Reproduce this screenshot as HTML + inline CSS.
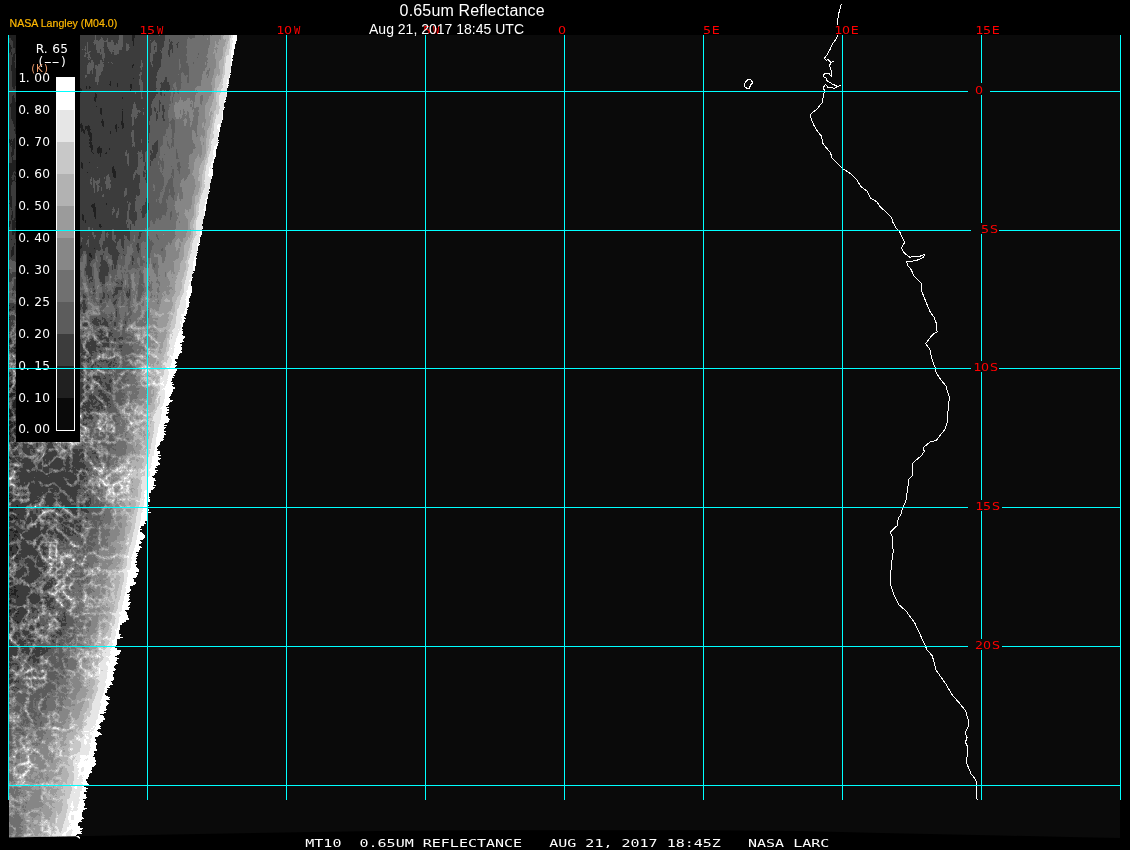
<!DOCTYPE html>
<html><head><meta charset="utf-8"><title>0.65um Reflectance</title>
<style>
html,body{margin:0;padding:0;background:#000;overflow:hidden}
svg{display:block}
text{font-family:"DejaVu Sans Mono","Liberation Mono",monospace;white-space:pre}
.sans{font-family:"Liberation Sans",sans-serif}
.dj{font-family:"DejaVu Sans","Liberation Sans",sans-serif}
.mono{font-family:"DejaVu Sans Mono","Liberation Mono",monospace}
</style></head><body>
<svg width="1130" height="850" viewBox="0 0 1130 850" style="opacity:0.999">
<defs>
<clipPath id="cc"><polygon points="9.0,35.0 237.0,35.0 237.0,36.0 237.0,36.0 237.0,37.0 237.0,37.0 237.0,38.0 237.0,38.0 237.0,39.0 237.0,39.0 237.0,40.0 237.0,40.0 237.0,41.0 236.0,41.0 236.0,42.0 236.0,42.0 236.0,43.0 236.0,43.0 236.0,44.0 235.0,44.0 235.0,45.0 235.0,45.0 235.0,46.0 235.0,46.0 235.0,47.0 235.0,47.0 235.0,48.0 235.0,48.0 235.0,49.0 234.0,49.0 234.0,50.0 234.0,50.0 234.0,51.0 234.0,51.0 234.0,52.0 234.0,52.0 234.0,53.0 234.0,53.0 234.0,54.0 234.0,54.0 234.0,55.0 233.0,55.0 233.0,56.0 233.0,56.0 233.0,57.0 233.0,57.0 233.0,58.0 232.0,58.0 232.0,59.0 233.0,59.0 233.0,60.0 233.0,60.0 233.0,61.0 232.0,61.0 232.0,62.0 232.0,62.0 232.0,63.0 232.0,63.0 232.0,64.0 232.0,64.0 232.0,65.0 232.0,65.0 232.0,66.0 231.0,66.0 231.0,67.0 231.0,67.0 231.0,68.0 231.0,68.0 231.0,69.0 231.0,69.0 231.0,70.0 231.0,70.0 231.0,71.0 231.0,71.0 231.0,72.0 231.0,72.0 231.0,73.0 230.0,73.0 230.0,74.0 231.0,74.0 231.0,75.0 230.0,75.0 230.0,76.0 230.0,76.0 230.0,77.0 230.0,77.0 230.0,78.0 229.0,78.0 229.0,79.0 229.0,79.0 229.0,80.0 229.0,80.0 229.0,81.0 229.0,81.0 229.0,82.0 229.0,82.0 229.0,83.0 229.0,83.0 229.0,84.0 228.0,84.0 228.0,85.0 229.0,85.0 229.0,86.0 228.0,86.0 228.0,87.0 228.0,87.0 228.0,88.0 227.0,88.0 227.0,89.0 227.0,89.0 227.0,90.0 227.0,90.0 227.0,91.0 227.0,91.0 227.0,92.0 227.0,92.0 227.0,93.0 227.0,93.0 227.0,94.0 227.0,94.0 227.0,95.0 227.0,95.0 227.0,96.0 227.0,96.0 227.0,97.0 226.0,97.0 226.0,98.0 226.0,98.0 226.0,99.0 226.0,99.0 226.0,100.0 225.0,100.0 225.0,101.0 226.0,101.0 226.0,102.0 225.0,102.0 225.0,103.0 224.0,103.0 224.0,104.0 224.0,104.0 224.0,105.0 224.0,105.0 224.0,106.0 224.0,106.0 224.0,107.0 225.0,107.0 225.0,108.0 224.0,108.0 224.0,109.0 224.0,109.0 224.0,110.0 223.0,110.0 223.0,111.0 223.0,111.0 223.0,112.0 223.0,112.0 223.0,113.0 223.0,113.0 223.0,114.0 223.0,114.0 223.0,115.0 223.0,115.0 223.0,116.0 223.0,116.0 223.0,117.0 223.0,117.0 223.0,118.0 223.0,118.0 223.0,119.0 223.0,119.0 223.0,120.0 222.0,120.0 222.0,121.0 222.0,121.0 222.0,122.0 222.0,122.0 222.0,123.0 221.0,123.0 221.0,124.0 221.0,124.0 221.0,125.0 221.0,125.0 221.0,126.0 221.0,126.0 221.0,127.0 220.0,127.0 220.0,128.0 220.0,128.0 220.0,129.0 220.0,129.0 220.0,130.0 220.0,130.0 220.0,131.0 220.0,131.0 220.0,132.0 219.0,132.0 219.0,133.0 219.0,133.0 219.0,134.0 219.0,134.0 219.0,135.0 219.0,135.0 219.0,136.0 219.0,136.0 219.0,137.0 218.0,137.0 218.0,138.0 218.0,138.0 218.0,139.0 218.0,139.0 218.0,140.0 219.0,140.0 219.0,141.0 218.0,141.0 218.0,142.0 219.0,142.0 219.0,143.0 218.0,143.0 218.0,144.0 218.0,144.0 218.0,145.0 218.0,145.0 218.0,146.0 217.0,146.0 217.0,147.0 217.0,147.0 217.0,148.0 217.0,148.0 217.0,149.0 216.0,149.0 216.0,150.0 216.0,150.0 216.0,151.0 216.0,151.0 216.0,152.0 216.0,152.0 216.0,153.0 216.0,153.0 216.0,154.0 216.0,154.0 216.0,155.0 216.0,155.0 216.0,156.0 216.0,156.0 216.0,157.0 215.0,157.0 215.0,158.0 215.0,158.0 215.0,159.0 214.0,159.0 214.0,160.0 214.0,160.0 214.0,161.0 214.0,161.0 214.0,162.0 214.0,162.0 214.0,163.0 213.0,163.0 213.0,164.0 213.0,164.0 213.0,165.0 213.0,165.0 213.0,166.0 213.0,166.0 213.0,167.0 213.0,167.0 213.0,168.0 212.0,168.0 212.0,169.0 213.0,169.0 213.0,170.0 213.0,170.0 213.0,171.0 213.0,171.0 213.0,172.0 213.0,172.0 213.0,173.0 213.0,173.0 213.0,174.0 213.0,174.0 213.0,175.0 213.0,175.0 213.0,176.0 212.0,176.0 212.0,177.0 212.0,177.0 212.0,178.0 212.0,178.0 212.0,179.0 211.0,179.0 211.0,180.0 211.0,180.0 211.0,181.0 211.0,181.0 211.0,182.0 211.0,182.0 211.0,183.0 210.0,183.0 210.0,184.0 210.0,184.0 210.0,185.0 210.0,185.0 210.0,186.0 210.0,186.0 210.0,187.0 210.0,187.0 210.0,188.0 210.0,188.0 210.0,189.0 209.0,189.0 209.0,190.0 209.0,190.0 209.0,191.0 210.0,191.0 210.0,192.0 209.0,192.0 209.0,193.0 209.0,193.0 209.0,194.0 208.0,194.0 208.0,195.0 208.0,195.0 208.0,196.0 208.0,196.0 208.0,197.0 208.0,197.0 208.0,198.0 208.0,198.0 208.0,199.0 207.0,199.0 207.0,200.0 207.0,200.0 207.0,201.0 207.0,201.0 207.0,202.0 207.0,202.0 207.0,203.0 207.0,203.0 207.0,204.0 206.0,204.0 206.0,205.0 206.0,205.0 206.0,206.0 206.0,206.0 206.0,207.0 206.0,207.0 206.0,208.0 206.0,208.0 206.0,209.0 206.0,209.0 206.0,210.0 206.0,210.0 206.0,211.0 205.0,211.0 205.0,212.0 205.0,212.0 205.0,213.0 205.0,213.0 205.0,214.0 205.0,214.0 205.0,215.0 205.0,215.0 205.0,216.0 204.0,216.0 204.0,217.0 204.0,217.0 204.0,218.0 204.0,218.0 204.0,219.0 203.0,219.0 203.0,220.0 203.0,220.0 203.0,221.0 203.0,221.0 203.0,222.0 203.0,222.0 203.0,223.0 203.0,223.0 203.0,224.0 202.0,224.0 202.0,225.0 202.0,225.0 202.0,226.0 203.0,226.0 203.0,227.0 203.0,227.0 203.0,228.0 203.0,228.0 203.0,229.0 202.0,229.0 202.0,230.0 202.0,230.0 202.0,231.0 202.0,231.0 202.0,232.0 202.0,232.0 202.0,233.0 202.0,233.0 202.0,234.0 202.0,234.0 202.0,235.0 201.0,235.0 201.0,236.0 201.0,236.0 201.0,237.0 200.0,237.0 200.0,238.0 200.0,238.0 200.0,239.0 200.0,239.0 200.0,240.0 200.0,240.0 200.0,241.0 200.0,241.0 200.0,242.0 200.0,242.0 200.0,243.0 199.0,243.0 199.0,244.0 200.0,244.0 200.0,245.0 199.0,245.0 199.0,246.0 198.0,246.0 198.0,247.0 198.0,247.0 198.0,248.0 198.0,248.0 198.0,249.0 198.0,249.0 198.0,250.0 198.0,250.0 198.0,251.0 197.0,251.0 197.0,252.0 198.0,252.0 198.0,253.0 197.0,253.0 197.0,254.0 197.0,254.0 197.0,255.0 197.0,255.0 197.0,256.0 196.0,256.0 196.0,257.0 196.0,257.0 196.0,258.0 197.0,258.0 197.0,259.0 196.0,259.0 196.0,260.0 196.0,260.0 196.0,261.0 196.0,261.0 196.0,262.0 196.0,262.0 196.0,263.0 196.0,263.0 196.0,264.0 196.0,264.0 196.0,265.0 196.0,265.0 196.0,266.0 195.0,266.0 195.0,267.0 195.0,267.0 195.0,268.0 195.0,268.0 195.0,269.0 195.0,269.0 195.0,270.0 195.0,270.0 195.0,271.0 193.0,271.0 193.0,272.0 194.0,272.0 194.0,273.0 193.0,273.0 193.0,274.0 192.0,274.0 192.0,275.0 192.0,275.0 192.0,276.0 192.0,276.0 192.0,277.0 193.0,277.0 193.0,278.0 192.0,278.0 192.0,279.0 192.0,279.0 192.0,280.0 192.0,280.0 192.0,281.0 191.0,281.0 191.0,282.0 191.0,282.0 191.0,283.0 191.0,283.0 191.0,284.0 191.0,284.0 191.0,285.0 191.0,285.0 191.0,286.0 192.0,286.0 192.0,287.0 192.0,287.0 192.0,288.0 192.0,288.0 192.0,289.0 192.0,289.0 192.0,290.0 192.0,290.0 192.0,291.0 192.0,291.0 192.0,292.0 192.0,292.0 192.0,293.0 191.0,293.0 191.0,294.0 191.0,294.0 191.0,295.0 191.0,295.0 191.0,296.0 190.0,296.0 190.0,297.0 190.0,297.0 190.0,298.0 189.0,298.0 189.0,299.0 189.0,299.0 189.0,300.0 189.0,300.0 189.0,301.0 189.0,301.0 189.0,302.0 190.0,302.0 190.0,303.0 189.0,303.0 189.0,304.0 189.0,304.0 189.0,305.0 189.0,305.0 189.0,306.0 189.0,306.0 189.0,307.0 188.0,307.0 188.0,308.0 187.0,308.0 187.0,309.0 188.0,309.0 188.0,310.0 187.0,310.0 187.0,311.0 187.0,311.0 187.0,312.0 187.0,312.0 187.0,313.0 187.0,313.0 187.0,314.0 186.0,314.0 186.0,315.0 186.0,315.0 186.0,316.0 184.0,316.0 184.0,317.0 185.0,317.0 185.0,318.0 186.0,318.0 186.0,319.0 184.0,319.0 184.0,320.0 185.0,320.0 185.0,321.0 185.0,321.0 185.0,322.0 184.0,322.0 184.0,323.0 183.0,323.0 183.0,324.0 183.0,324.0 183.0,325.0 183.0,325.0 183.0,326.0 183.0,326.0 183.0,327.0 182.0,327.0 182.0,328.0 182.0,328.0 182.0,329.0 183.0,329.0 183.0,330.0 182.0,330.0 182.0,331.0 183.0,331.0 183.0,332.0 183.0,332.0 183.0,333.0 183.0,333.0 183.0,334.0 182.0,334.0 182.0,335.0 183.0,335.0 183.0,336.0 185.0,336.0 185.0,337.0 185.0,337.0 185.0,338.0 184.0,338.0 184.0,339.0 183.0,339.0 183.0,340.0 183.0,340.0 183.0,341.0 184.0,341.0 184.0,342.0 182.0,342.0 182.0,343.0 180.0,343.0 180.0,344.0 182.0,344.0 182.0,345.0 182.0,345.0 182.0,346.0 181.0,346.0 181.0,347.0 182.0,347.0 182.0,348.0 182.0,348.0 182.0,349.0 182.0,349.0 182.0,350.0 181.0,350.0 181.0,351.0 182.0,351.0 182.0,352.0 182.0,352.0 182.0,353.0 180.0,353.0 180.0,354.0 179.0,354.0 179.0,355.0 179.0,355.0 179.0,356.0 178.0,356.0 178.0,357.0 178.0,357.0 178.0,358.0 178.0,358.0 178.0,359.0 175.0,359.0 175.0,360.0 175.0,360.0 175.0,361.0 176.0,361.0 176.0,362.0 177.0,362.0 177.0,363.0 176.0,363.0 176.0,364.0 175.0,364.0 175.0,365.0 177.0,365.0 177.0,366.0 176.0,366.0 176.0,367.0 175.0,367.0 175.0,368.0 178.0,368.0 178.0,369.0 177.0,369.0 177.0,370.0 177.0,370.0 177.0,371.0 176.0,371.0 176.0,372.0 176.0,372.0 176.0,373.0 175.0,373.0 175.0,374.0 174.0,374.0 174.0,375.0 175.0,375.0 175.0,376.0 173.0,376.0 173.0,377.0 174.0,377.0 174.0,378.0 172.0,378.0 172.0,379.0 172.0,379.0 172.0,380.0 172.0,380.0 172.0,381.0 171.0,381.0 171.0,382.0 173.0,382.0 173.0,383.0 172.0,383.0 172.0,384.0 174.0,384.0 174.0,385.0 172.0,385.0 172.0,386.0 173.0,386.0 173.0,387.0 175.0,387.0 175.0,388.0 175.0,388.0 175.0,389.0 173.0,389.0 173.0,390.0 173.0,390.0 173.0,391.0 173.0,391.0 173.0,392.0 172.0,392.0 172.0,393.0 172.0,393.0 172.0,394.0 171.0,394.0 171.0,395.0 171.0,395.0 171.0,396.0 170.0,396.0 170.0,397.0 169.0,397.0 169.0,398.0 170.0,398.0 170.0,399.0 170.0,399.0 170.0,400.0 173.0,400.0 173.0,401.0 172.0,401.0 172.0,402.0 170.0,402.0 170.0,403.0 169.0,403.0 169.0,404.0 169.0,404.0 169.0,405.0 168.0,405.0 168.0,406.0 166.0,406.0 166.0,407.0 169.0,407.0 169.0,408.0 167.0,408.0 167.0,409.0 169.0,409.0 169.0,410.0 169.0,410.0 169.0,411.0 167.0,411.0 167.0,412.0 169.0,412.0 169.0,413.0 168.0,413.0 168.0,414.0 166.0,414.0 166.0,415.0 166.0,415.0 166.0,416.0 168.0,416.0 168.0,417.0 168.0,417.0 168.0,418.0 169.0,418.0 169.0,419.0 170.0,419.0 170.0,420.0 169.0,420.0 169.0,421.0 169.0,421.0 169.0,422.0 168.0,422.0 168.0,423.0 165.0,423.0 165.0,424.0 164.0,424.0 164.0,425.0 167.0,425.0 167.0,426.0 164.0,426.0 164.0,427.0 166.0,427.0 166.0,428.0 165.0,428.0 165.0,429.0 164.0,429.0 164.0,430.0 164.0,430.0 164.0,431.0 166.0,431.0 166.0,432.0 164.0,432.0 164.0,433.0 165.0,433.0 165.0,434.0 166.0,434.0 166.0,435.0 164.0,435.0 164.0,436.0 164.0,436.0 164.0,437.0 164.0,437.0 164.0,438.0 163.0,438.0 163.0,439.0 164.0,439.0 164.0,440.0 163.0,440.0 163.0,441.0 161.0,441.0 161.0,442.0 160.0,442.0 160.0,443.0 160.0,443.0 160.0,444.0 160.0,444.0 160.0,445.0 159.0,445.0 159.0,446.0 158.0,446.0 158.0,447.0 157.0,447.0 157.0,448.0 157.0,448.0 157.0,449.0 158.0,449.0 158.0,450.0 157.0,450.0 157.0,451.0 160.0,451.0 160.0,452.0 160.0,452.0 160.0,453.0 160.0,453.0 160.0,454.0 158.0,454.0 158.0,455.0 161.0,455.0 161.0,456.0 158.0,456.0 158.0,457.0 159.0,457.0 159.0,458.0 161.0,458.0 161.0,459.0 160.0,459.0 160.0,460.0 158.0,460.0 158.0,461.0 158.0,461.0 158.0,462.0 159.0,462.0 159.0,463.0 160.0,463.0 160.0,464.0 160.0,464.0 160.0,465.0 158.0,465.0 158.0,466.0 156.0,466.0 156.0,467.0 157.0,467.0 157.0,468.0 155.0,468.0 155.0,469.0 155.0,469.0 155.0,470.0 158.0,470.0 158.0,471.0 156.0,471.0 156.0,472.0 157.0,472.0 157.0,473.0 155.0,473.0 155.0,474.0 155.0,474.0 155.0,475.0 154.0,475.0 154.0,476.0 152.0,476.0 152.0,477.0 153.0,477.0 153.0,478.0 155.0,478.0 155.0,479.0 155.0,479.0 155.0,480.0 156.0,480.0 156.0,481.0 154.0,481.0 154.0,482.0 154.0,482.0 154.0,483.0 154.0,483.0 154.0,484.0 154.0,484.0 154.0,485.0 156.0,485.0 156.0,486.0 153.0,486.0 153.0,487.0 155.0,487.0 155.0,488.0 154.0,488.0 154.0,489.0 153.0,489.0 153.0,490.0 151.0,490.0 151.0,491.0 151.0,491.0 151.0,492.0 151.0,492.0 151.0,493.0 149.0,493.0 149.0,494.0 149.0,494.0 149.0,495.0 149.0,495.0 149.0,496.0 149.0,496.0 149.0,497.0 150.0,497.0 150.0,498.0 149.0,498.0 149.0,499.0 150.0,499.0 150.0,500.0 150.0,500.0 150.0,501.0 150.0,501.0 150.0,502.0 147.0,502.0 147.0,503.0 148.0,503.0 148.0,504.0 148.0,504.0 148.0,505.0 149.0,505.0 149.0,506.0 147.0,506.0 147.0,507.0 149.0,507.0 149.0,508.0 147.0,508.0 147.0,509.0 149.0,509.0 149.0,510.0 149.0,510.0 149.0,511.0 148.0,511.0 148.0,512.0 151.0,512.0 151.0,513.0 148.0,513.0 148.0,514.0 147.0,514.0 147.0,515.0 147.0,515.0 147.0,516.0 148.0,516.0 148.0,517.0 148.0,517.0 148.0,518.0 148.0,518.0 148.0,519.0 148.0,519.0 148.0,520.0 147.0,520.0 147.0,521.0 145.0,521.0 145.0,522.0 145.0,522.0 145.0,523.0 146.0,523.0 146.0,524.0 144.0,524.0 144.0,525.0 144.0,525.0 144.0,526.0 141.0,526.0 141.0,527.0 141.0,527.0 141.0,528.0 140.0,528.0 140.0,529.0 142.0,529.0 142.0,530.0 140.0,530.0 140.0,531.0 140.0,531.0 140.0,532.0 142.0,532.0 142.0,533.0 143.0,533.0 143.0,534.0 144.0,534.0 144.0,535.0 145.0,535.0 145.0,536.0 145.0,536.0 145.0,537.0 145.0,537.0 145.0,538.0 144.0,538.0 144.0,539.0 143.0,539.0 143.0,540.0 140.0,540.0 140.0,541.0 141.0,541.0 141.0,542.0 142.0,542.0 142.0,543.0 141.0,543.0 141.0,544.0 139.0,544.0 139.0,545.0 139.0,545.0 139.0,546.0 141.0,546.0 141.0,547.0 142.0,547.0 142.0,548.0 140.0,548.0 140.0,549.0 140.0,549.0 140.0,550.0 139.0,550.0 139.0,551.0 139.0,551.0 139.0,552.0 136.0,552.0 136.0,553.0 138.0,553.0 138.0,554.0 137.0,554.0 137.0,555.0 138.0,555.0 138.0,556.0 137.0,556.0 137.0,557.0 136.0,557.0 136.0,558.0 137.0,558.0 137.0,559.0 136.0,559.0 136.0,560.0 136.0,560.0 136.0,561.0 137.0,561.0 137.0,562.0 137.0,562.0 137.0,563.0 135.0,563.0 135.0,564.0 137.0,564.0 137.0,565.0 136.0,565.0 136.0,566.0 136.0,566.0 136.0,567.0 137.0,567.0 137.0,568.0 138.0,568.0 138.0,569.0 139.0,569.0 139.0,570.0 139.0,570.0 139.0,571.0 139.0,571.0 139.0,572.0 136.0,572.0 136.0,573.0 138.0,573.0 138.0,574.0 138.0,574.0 138.0,575.0 137.0,575.0 137.0,576.0 137.0,576.0 137.0,577.0 136.0,577.0 136.0,578.0 133.0,578.0 133.0,579.0 134.0,579.0 134.0,580.0 134.0,580.0 134.0,581.0 134.0,581.0 134.0,582.0 136.0,582.0 136.0,583.0 136.0,583.0 136.0,584.0 135.0,584.0 135.0,585.0 133.0,585.0 133.0,586.0 130.0,586.0 130.0,587.0 130.0,587.0 130.0,588.0 130.0,588.0 130.0,589.0 131.0,589.0 131.0,590.0 131.0,590.0 131.0,591.0 130.0,591.0 130.0,592.0 129.0,592.0 129.0,593.0 127.0,593.0 127.0,594.0 130.0,594.0 130.0,595.0 129.0,595.0 129.0,596.0 130.0,596.0 130.0,597.0 129.0,597.0 129.0,598.0 129.0,598.0 129.0,599.0 130.0,599.0 130.0,600.0 129.0,600.0 129.0,601.0 128.0,601.0 128.0,602.0 131.0,602.0 131.0,603.0 130.0,603.0 130.0,604.0 130.0,604.0 130.0,605.0 129.0,605.0 129.0,606.0 128.0,606.0 128.0,607.0 130.0,607.0 130.0,608.0 129.0,608.0 129.0,609.0 129.0,609.0 129.0,610.0 125.0,610.0 125.0,611.0 126.0,611.0 126.0,612.0 127.0,612.0 127.0,613.0 127.0,613.0 127.0,614.0 127.0,614.0 127.0,615.0 128.0,615.0 128.0,616.0 128.0,616.0 128.0,617.0 128.0,617.0 128.0,618.0 129.0,618.0 129.0,619.0 129.0,619.0 129.0,620.0 126.0,620.0 126.0,621.0 126.0,621.0 126.0,622.0 124.0,622.0 124.0,623.0 122.0,623.0 122.0,624.0 122.0,624.0 122.0,625.0 120.0,625.0 120.0,626.0 120.0,626.0 120.0,627.0 120.0,627.0 120.0,628.0 120.0,628.0 120.0,629.0 120.0,629.0 120.0,630.0 119.0,630.0 119.0,631.0 119.0,631.0 119.0,632.0 119.0,632.0 119.0,633.0 119.0,633.0 119.0,634.0 121.0,634.0 121.0,635.0 120.0,635.0 120.0,636.0 120.0,636.0 120.0,637.0 123.0,637.0 123.0,638.0 120.0,638.0 120.0,639.0 117.0,639.0 117.0,640.0 117.0,640.0 117.0,641.0 117.0,641.0 117.0,642.0 117.0,642.0 117.0,643.0 117.0,643.0 117.0,644.0 117.0,644.0 117.0,645.0 116.0,645.0 116.0,646.0 117.0,646.0 117.0,647.0 115.0,647.0 115.0,648.0 117.0,648.0 117.0,649.0 117.0,649.0 117.0,650.0 121.0,650.0 121.0,651.0 121.0,651.0 121.0,652.0 120.0,652.0 120.0,653.0 120.0,653.0 120.0,654.0 119.0,654.0 119.0,655.0 117.0,655.0 117.0,656.0 115.0,656.0 115.0,657.0 117.0,657.0 117.0,658.0 119.0,658.0 119.0,659.0 117.0,659.0 117.0,660.0 117.0,660.0 117.0,661.0 116.0,661.0 116.0,662.0 117.0,662.0 117.0,663.0 118.0,663.0 118.0,664.0 116.0,664.0 116.0,665.0 115.0,665.0 115.0,666.0 114.0,666.0 114.0,667.0 114.0,667.0 114.0,668.0 115.0,668.0 115.0,669.0 116.0,669.0 116.0,670.0 115.0,670.0 115.0,671.0 113.0,671.0 113.0,672.0 114.0,672.0 114.0,673.0 114.0,673.0 114.0,674.0 113.0,674.0 113.0,675.0 113.0,675.0 113.0,676.0 113.0,676.0 113.0,677.0 114.0,677.0 114.0,678.0 114.0,678.0 114.0,679.0 114.0,679.0 114.0,680.0 113.0,680.0 113.0,681.0 111.0,681.0 111.0,682.0 112.0,682.0 112.0,683.0 112.0,683.0 112.0,684.0 113.0,684.0 113.0,685.0 110.0,685.0 110.0,686.0 109.0,686.0 109.0,687.0 110.0,687.0 110.0,688.0 107.0,688.0 107.0,689.0 108.0,689.0 108.0,690.0 107.0,690.0 107.0,691.0 107.0,691.0 107.0,692.0 107.0,692.0 107.0,693.0 105.0,693.0 105.0,694.0 105.0,694.0 105.0,695.0 106.0,695.0 106.0,696.0 108.0,696.0 108.0,697.0 110.0,697.0 110.0,698.0 109.0,698.0 109.0,699.0 110.0,699.0 110.0,700.0 106.0,700.0 106.0,701.0 107.0,701.0 107.0,702.0 108.0,702.0 108.0,703.0 109.0,703.0 109.0,704.0 108.0,704.0 108.0,705.0 107.0,705.0 107.0,706.0 106.0,706.0 106.0,707.0 106.0,707.0 106.0,708.0 106.0,708.0 106.0,709.0 107.0,709.0 107.0,710.0 106.0,710.0 106.0,711.0 104.0,711.0 104.0,712.0 106.0,712.0 106.0,713.0 104.0,713.0 104.0,714.0 100.0,714.0 100.0,715.0 103.0,715.0 103.0,716.0 104.0,716.0 104.0,717.0 104.0,717.0 104.0,718.0 105.0,718.0 105.0,719.0 105.0,719.0 105.0,720.0 103.0,720.0 103.0,721.0 103.0,721.0 103.0,722.0 101.0,722.0 101.0,723.0 100.0,723.0 100.0,724.0 99.0,724.0 99.0,725.0 100.0,725.0 100.0,726.0 101.0,726.0 101.0,727.0 100.0,727.0 100.0,728.0 101.0,728.0 101.0,729.0 98.0,729.0 98.0,730.0 97.0,730.0 97.0,731.0 98.0,731.0 98.0,732.0 100.0,732.0 100.0,733.0 101.0,733.0 101.0,734.0 102.0,734.0 102.0,735.0 99.0,735.0 99.0,736.0 98.0,736.0 98.0,737.0 95.0,737.0 95.0,738.0 95.0,738.0 95.0,739.0 96.0,739.0 96.0,740.0 96.0,740.0 96.0,741.0 95.0,741.0 95.0,742.0 96.0,742.0 96.0,743.0 97.0,743.0 97.0,744.0 97.0,744.0 97.0,745.0 96.0,745.0 96.0,746.0 96.0,746.0 96.0,747.0 96.0,747.0 96.0,748.0 96.0,748.0 96.0,749.0 97.0,749.0 97.0,750.0 97.0,750.0 97.0,751.0 94.0,751.0 94.0,752.0 94.0,752.0 94.0,753.0 95.0,753.0 95.0,754.0 94.0,754.0 94.0,755.0 94.0,755.0 94.0,756.0 93.0,756.0 93.0,757.0 95.0,757.0 95.0,758.0 95.0,758.0 95.0,759.0 95.0,759.0 95.0,760.0 96.0,760.0 96.0,761.0 96.0,761.0 96.0,762.0 95.0,762.0 95.0,763.0 96.0,763.0 96.0,764.0 96.0,764.0 96.0,765.0 95.0,765.0 95.0,766.0 94.0,766.0 94.0,767.0 92.0,767.0 92.0,768.0 92.0,768.0 92.0,769.0 92.0,769.0 92.0,770.0 91.0,770.0 91.0,771.0 92.0,771.0 92.0,772.0 92.0,772.0 92.0,773.0 90.0,773.0 90.0,774.0 89.0,774.0 89.0,775.0 89.0,775.0 89.0,776.0 89.0,776.0 89.0,777.0 88.0,777.0 88.0,778.0 88.0,778.0 88.0,779.0 86.0,779.0 86.0,780.0 86.0,780.0 86.0,781.0 87.0,781.0 87.0,782.0 87.0,782.0 87.0,783.0 88.0,783.0 88.0,784.0 89.0,784.0 89.0,785.0 88.0,785.0 88.0,786.0 84.0,786.0 84.0,787.0 86.0,787.0 86.0,788.0 88.0,788.0 88.0,789.0 86.0,789.0 86.0,790.0 86.0,790.0 86.0,791.0 87.0,791.0 87.0,792.0 84.0,792.0 84.0,793.0 84.0,793.0 84.0,794.0 86.0,794.0 86.0,795.0 86.0,795.0 86.0,796.0 86.0,796.0 86.0,797.0 87.0,797.0 87.0,798.0 86.0,798.0 86.0,799.0 83.0,799.0 83.0,800.0 85.0,800.0 85.0,801.0 84.0,801.0 84.0,802.0 84.0,802.0 84.0,803.0 85.0,803.0 85.0,804.0 85.0,804.0 85.0,805.0 85.0,805.0 85.0,806.0 84.0,806.0 84.0,807.0 84.0,807.0 84.0,808.0 87.0,808.0 87.0,809.0 85.0,809.0 85.0,810.0 83.0,810.0 83.0,811.0 83.0,811.0 83.0,812.0 82.0,812.0 82.0,813.0 82.0,813.0 82.0,814.0 82.0,814.0 82.0,815.0 82.0,815.0 82.0,816.0 82.0,816.0 82.0,817.0 83.0,817.0 83.0,818.0 84.0,818.0 84.0,819.0 82.0,819.0 82.0,820.0 81.0,820.0 81.0,821.0 82.0,821.0 82.0,822.0 79.0,822.0 79.0,823.0 78.0,823.0 78.0,824.0 78.0,824.0 78.0,825.0 78.0,825.0 78.0,826.0 80.0,826.0 80.0,827.0 80.0,827.0 80.0,828.0 83.0,828.0 83.0,829.0 82.0,829.0 82.0,830.0 80.0,830.0 80.0,831.0 82.0,831.0 82.0,832.0 81.0,832.0 81.0,833.0 82.0,833.0 82.0,834.0 77.0,834.0 77.0,835.0 76.0,835.0 76.0,836.0 79.0,836.0 79.0,837.0 80.0,837.0 80.0,838.0 80.0,838.0 80.0,839.0 76.0,836.2 9.0,837.6"/></clipPath>
<filter id="cf" x="0" y="0" width="320" height="870" filterUnits="userSpaceOnUse" primitiveUnits="userSpaceOnUse" color-interpolation-filters="sRGB">
<feGaussianBlur in="SourceGraphic" stdDeviation="1.5 4" result="src"/>
<feColorMatrix in="src" type="matrix" values="1 0 0 0 0  1 0 0 0 0  1 0 0 0 0  0 0 0 0 1" result="R"/>
<feColorMatrix in="src" type="matrix" values="0 1 0 0 0  0 1 0 0 0  0 1 0 0 0  0 0 0 0 1" result="G"/>
<feColorMatrix in="src" type="matrix" values="0 0 1 0 0  0 0 1 0 0  0 0 1 0 0  0 0 0 0 1" result="B"/>
<feColorMatrix in="src" type="matrix" values="0 0 -1 0 1  0 0 -1 0 1  0 0 -1 0 1  0 0 0 0 1" result="Bi"/>
<feTurbulence type="turbulence" baseFrequency="0.07 0.07" numOctaves="4" seed="7" result="tb"/>
<feColorMatrix in="tb" type="matrix" values="-2.9 0 0 0 1.12  -2.9 0 0 0 1.12  -2.9 0 0 0 1.12  0 0 0 0 1" result="N1a"/>
<feTurbulence type="fractalNoise" baseFrequency="0.022 0.022" numOctaves="3" seed="23" result="lf"/>
<feColorMatrix in="lf" type="matrix" values="2.6 0 0 0 -0.8  2.6 0 0 0 -0.8  2.6 0 0 0 -0.8  0 0 0 0 1" result="NLo"/>
<feComposite in="N1a" in2="NLo" operator="arithmetic" k1="0" k2="0.58" k3="0.42" k4="-0.14" result="N1c"/>
<feTurbulence type="fractalNoise" baseFrequency="0.3 0.3" numOctaves="2" seed="41" result="ff"/>
<feColorMatrix in="ff" type="matrix" values="0 0 2.6 0 -0.8  0 0 2.6 0 -0.8  0 0 2.6 0 -0.8  0 0 0 0 1" result="NF"/>
<feComposite in="N1c" in2="NF" operator="arithmetic" k1="0" k2="1" k3="0.24" k4="0" result="N1b"/>
<feComponentTransfer in="N1b" result="N1"><feFuncR type="gamma" exponent="1.7" amplitude="1" offset="0"/><feFuncG type="gamma" exponent="1.7" amplitude="1" offset="0"/><feFuncB type="gamma" exponent="1.7" amplitude="1" offset="0"/></feComponentTransfer>
<feTurbulence type="fractalNoise" baseFrequency="0.16 0.05" numOctaves="4" seed="11" result="fn"/>
<feColorMatrix in="fn" type="matrix" values="0 2.6 0 0 -0.8  0 2.6 0 0 -0.8  0 2.6 0 0 -0.8  0 0 0 0 1" result="N2"/>
<feComposite in="B" in2="N1" operator="arithmetic" k1="1" k2="0" k3="0" k4="0" result="T"/>
<feComposite in="Bi" in2="N2" operator="arithmetic" k1="1" k2="0" k3="0" k4="0" result="U"/>
<feComposite in="T" in2="U" operator="arithmetic" k1="0" k2="1" k3="1" k4="0" result="N"/>
<feComposite in="G" in2="N" operator="arithmetic" k1="1" k2="0" k3="0" k4="0" result="GN"/>
<feComposite in="R" in2="GN" operator="arithmetic" k1="0" k2="1" k3="1" k4="0" result="F"/>
<feComponentTransfer in="F"><feFuncR type="discrete" tableValues="0.0392 0.1255 0.2353 0.3608 0.4392 0.5294 0.6078 0.6980 0.7843 0.9020 1.0000"/><feFuncG type="discrete" tableValues="0.0392 0.1255 0.2353 0.3608 0.4392 0.5294 0.6078 0.6980 0.7843 0.9020 1.0000"/><feFuncB type="discrete" tableValues="0.0392 0.1255 0.2353 0.3608 0.4392 0.5294 0.6078 0.6980 0.7843 0.9020 1.0000"/></feComponentTransfer>
</filter>
</defs>
<rect width="1130" height="850" fill="#000"/>
<polygon points="9.0,35.0 1120.0,35.0 1120.0,838.0 1080.0,837.3 1000.0,835.5 880.0,833.0 800.0,831.0 700.0,830.3 480.0,830.3 380.0,831.0 300.0,832.3 200.0,834.0 75.0,836.2 9.0,837.6" fill="#0a0a0a"/>
<g clip-path="url(#cc)"><g filter="url(#cf)">
<rect x="0" y="0" width="320" height="870" fill="#300000"/>
<polygon fill="#f11700" points="270.6,15.0 267.0,35.5 237.0,35.5 240.6,15.0"/>
<polygon fill="#e91700" points="240.6,15.0 237.0,35.5 234.0,35.5 237.6,15.0"/>
<polygon fill="#d51700" points="237.6,15.0 234.0,35.5 230.0,35.5 233.6,15.0"/>
<polygon fill="#b91700" points="233.6,15.0 230.0,35.5 227.0,35.5 230.6,15.0"/>
<polygon fill="#9a1700" points="230.6,15.0 227.0,35.5 223.0,35.5 226.6,15.0"/>
<polygon fill="#851700" points="226.6,15.0 223.0,35.5 219.0,35.5 222.6,15.0"/>
<polygon fill="#7a1700" points="222.6,15.0 219.0,35.5 215.0,35.5 218.6,15.0"/>
<polygon fill="#6f1700" points="218.6,15.0 215.0,35.5 210.0,35.5 213.6,15.0"/>
<polygon fill="#631700" points="213.6,15.0 210.0,35.5 204.0,35.5 207.6,15.0"/>
<polygon fill="#591700" points="207.6,15.0 204.0,35.5 197.0,35.5 200.6,15.0"/>
<polygon fill="#531700" points="200.6,15.0 197.0,35.5 189.0,35.5 192.6,15.0"/>
<polygon fill="#4a1700" points="192.6,15.0 189.0,35.5 179.0,35.5 182.6,15.0"/>
<polygon fill="#3f1700" points="182.6,15.0 179.0,35.5 164.0,35.5 167.6,15.0"/>
<polygon fill="#311700" points="167.6,15.0 164.0,35.5 142.0,35.5 145.6,15.0"/>
<polygon fill="#2e1700" points="145.6,15.0 142.0,35.5 -63.0,35.5 -59.4,15.0"/>
<polygon fill="#f11700" points="267.0,35.0 263.4,55.5 233.4,55.5 237.0,35.0"/>
<polygon fill="#e91700" points="237.0,35.0 233.4,55.5 230.4,55.5 234.0,35.0"/>
<polygon fill="#d51700" points="234.0,35.0 230.4,55.5 226.4,55.5 230.0,35.0"/>
<polygon fill="#b91700" points="230.0,35.0 226.4,55.5 223.4,55.5 227.0,35.0"/>
<polygon fill="#9a1700" points="227.0,35.0 223.4,55.5 219.4,55.5 223.0,35.0"/>
<polygon fill="#851700" points="223.0,35.0 219.4,55.5 215.4,55.5 219.0,35.0"/>
<polygon fill="#7a1700" points="219.0,35.0 215.4,55.5 211.4,55.5 215.0,35.0"/>
<polygon fill="#6f1700" points="215.0,35.0 211.4,55.5 206.4,55.5 210.0,35.0"/>
<polygon fill="#631700" points="210.0,35.0 206.4,55.5 200.4,55.5 204.0,35.0"/>
<polygon fill="#591700" points="204.0,35.0 200.4,55.5 193.4,55.5 197.0,35.0"/>
<polygon fill="#531700" points="197.0,35.0 193.4,55.5 185.4,55.5 189.0,35.0"/>
<polygon fill="#4a1700" points="189.0,35.0 185.4,55.5 175.4,55.5 179.0,35.0"/>
<polygon fill="#3f1700" points="179.0,35.0 175.4,55.5 160.4,55.5 164.0,35.0"/>
<polygon fill="#311700" points="164.0,35.0 160.4,55.5 138.4,55.5 142.0,35.0"/>
<polygon fill="#2e1700" points="142.0,35.0 138.4,55.5 -66.6,55.5 -63.0,35.0"/>
<polygon fill="#f11700" points="263.4,55.0 259.8,75.5 229.8,75.5 233.4,55.0"/>
<polygon fill="#e91700" points="233.4,55.0 229.8,75.5 226.8,75.5 230.4,55.0"/>
<polygon fill="#d51700" points="230.4,55.0 226.8,75.5 222.8,75.5 226.4,55.0"/>
<polygon fill="#b91700" points="226.4,55.0 222.8,75.5 219.8,75.5 223.4,55.0"/>
<polygon fill="#9a1700" points="223.4,55.0 219.8,75.5 215.8,75.5 219.4,55.0"/>
<polygon fill="#851700" points="219.4,55.0 215.8,75.5 211.8,75.5 215.4,55.0"/>
<polygon fill="#7a1700" points="215.4,55.0 211.8,75.5 207.8,75.5 211.4,55.0"/>
<polygon fill="#6f1700" points="211.4,55.0 207.8,75.5 202.8,75.5 206.4,55.0"/>
<polygon fill="#631700" points="206.4,55.0 202.8,75.5 196.8,75.5 200.4,55.0"/>
<polygon fill="#591700" points="200.4,55.0 196.8,75.5 189.8,75.5 193.4,55.0"/>
<polygon fill="#531700" points="193.4,55.0 189.8,75.5 181.8,75.5 185.4,55.0"/>
<polygon fill="#4a1700" points="185.4,55.0 181.8,75.5 171.8,75.5 175.4,55.0"/>
<polygon fill="#3f1700" points="175.4,55.0 171.8,75.5 156.8,75.5 160.4,55.0"/>
<polygon fill="#311700" points="160.4,55.0 156.8,75.5 134.8,75.5 138.4,55.0"/>
<polygon fill="#2e1700" points="138.4,55.0 134.8,75.5 -70.2,75.5 -66.6,55.0"/>
<polygon fill="#f11700" points="259.8,75.0 256.2,95.5 226.2,95.5 229.8,75.0"/>
<polygon fill="#e91700" points="229.8,75.0 226.2,95.5 223.2,95.5 226.8,75.0"/>
<polygon fill="#d51700" points="226.8,75.0 223.2,95.5 219.2,95.5 222.8,75.0"/>
<polygon fill="#b91700" points="222.8,75.0 219.2,95.5 216.2,95.5 219.8,75.0"/>
<polygon fill="#9a1700" points="219.8,75.0 216.2,95.5 212.2,95.5 215.8,75.0"/>
<polygon fill="#851700" points="215.8,75.0 212.2,95.5 208.2,95.5 211.8,75.0"/>
<polygon fill="#7a1700" points="211.8,75.0 208.2,95.5 204.2,95.5 207.8,75.0"/>
<polygon fill="#6f1700" points="207.8,75.0 204.2,95.5 199.2,95.5 202.8,75.0"/>
<polygon fill="#631700" points="202.8,75.0 199.2,95.5 193.2,95.5 196.8,75.0"/>
<polygon fill="#591700" points="196.8,75.0 193.2,95.5 186.2,95.5 189.8,75.0"/>
<polygon fill="#531700" points="189.8,75.0 186.2,95.5 178.2,95.5 181.8,75.0"/>
<polygon fill="#4a1700" points="181.8,75.0 178.2,95.5 168.2,95.5 171.8,75.0"/>
<polygon fill="#3f1700" points="171.8,75.0 168.2,95.5 153.2,95.5 156.8,75.0"/>
<polygon fill="#311700" points="156.8,75.0 153.2,95.5 131.2,95.5 134.8,75.0"/>
<polygon fill="#2e1700" points="134.8,75.0 131.2,95.5 -73.8,95.5 -70.2,75.0"/>
<polygon fill="#f11700" points="256.2,95.0 252.7,115.5 222.7,115.5 226.2,95.0"/>
<polygon fill="#e91700" points="226.2,95.0 222.7,115.5 219.7,115.5 223.2,95.0"/>
<polygon fill="#d51700" points="223.2,95.0 219.7,115.5 215.7,115.5 219.2,95.0"/>
<polygon fill="#b91700" points="219.2,95.0 215.7,115.5 212.7,115.5 216.2,95.0"/>
<polygon fill="#9a1700" points="216.2,95.0 212.7,115.5 208.7,115.5 212.2,95.0"/>
<polygon fill="#851700" points="212.2,95.0 208.7,115.5 204.7,115.5 208.2,95.0"/>
<polygon fill="#7a1700" points="208.2,95.0 204.7,115.5 200.7,115.5 204.2,95.0"/>
<polygon fill="#6f1700" points="204.2,95.0 200.7,115.5 195.7,115.5 199.2,95.0"/>
<polygon fill="#631700" points="199.2,95.0 195.7,115.5 189.7,115.5 193.2,95.0"/>
<polygon fill="#591700" points="193.2,95.0 189.7,115.5 182.7,115.5 186.2,95.0"/>
<polygon fill="#531700" points="186.2,95.0 182.7,115.5 174.7,115.5 178.2,95.0"/>
<polygon fill="#4a1700" points="178.2,95.0 174.7,115.5 164.7,115.5 168.2,95.0"/>
<polygon fill="#3f1700" points="168.2,95.0 164.7,115.5 149.7,115.5 153.2,95.0"/>
<polygon fill="#311700" points="153.2,95.0 149.7,115.5 127.7,115.5 131.2,95.0"/>
<polygon fill="#2e1700" points="131.2,95.0 127.7,115.5 -77.3,115.5 -73.8,95.0"/>
<polygon fill="#f11700" points="252.7,115.0 249.1,135.5 219.1,135.5 222.7,115.0"/>
<polygon fill="#e91700" points="222.7,115.0 219.1,135.5 216.1,135.5 219.7,115.0"/>
<polygon fill="#d51700" points="219.7,115.0 216.1,135.5 212.1,135.5 215.7,115.0"/>
<polygon fill="#b91700" points="215.7,115.0 212.1,135.5 209.1,135.5 212.7,115.0"/>
<polygon fill="#9a1700" points="212.7,115.0 209.1,135.5 205.1,135.5 208.7,115.0"/>
<polygon fill="#851700" points="208.7,115.0 205.1,135.5 201.1,135.5 204.7,115.0"/>
<polygon fill="#7a1700" points="204.7,115.0 201.1,135.5 197.1,135.5 200.7,115.0"/>
<polygon fill="#6f1700" points="200.7,115.0 197.1,135.5 192.1,135.5 195.7,115.0"/>
<polygon fill="#631700" points="195.7,115.0 192.1,135.5 186.1,135.5 189.7,115.0"/>
<polygon fill="#591700" points="189.7,115.0 186.1,135.5 179.1,135.5 182.7,115.0"/>
<polygon fill="#531700" points="182.7,115.0 179.1,135.5 171.1,135.5 174.7,115.0"/>
<polygon fill="#4a1700" points="174.7,115.0 171.1,135.5 161.1,135.5 164.7,115.0"/>
<polygon fill="#3f1700" points="164.7,115.0 161.1,135.5 146.1,135.5 149.7,115.0"/>
<polygon fill="#311700" points="149.7,115.0 146.1,135.5 124.1,135.5 127.7,115.0"/>
<polygon fill="#2e1700" points="127.7,115.0 124.1,135.5 -80.9,135.5 -77.3,115.0"/>
<polygon fill="#f11700" points="249.1,135.0 245.5,155.5 215.5,155.5 219.1,135.0"/>
<polygon fill="#e91700" points="219.1,135.0 215.5,155.5 212.5,155.5 216.1,135.0"/>
<polygon fill="#d51700" points="216.1,135.0 212.5,155.5 208.5,155.5 212.1,135.0"/>
<polygon fill="#b91700" points="212.1,135.0 208.5,155.5 205.5,155.5 209.1,135.0"/>
<polygon fill="#9a1700" points="209.1,135.0 205.5,155.5 201.5,155.5 205.1,135.0"/>
<polygon fill="#851700" points="205.1,135.0 201.5,155.5 197.5,155.5 201.1,135.0"/>
<polygon fill="#7a1700" points="201.1,135.0 197.5,155.5 193.5,155.5 197.1,135.0"/>
<polygon fill="#6f1700" points="197.1,135.0 193.5,155.5 188.5,155.5 192.1,135.0"/>
<polygon fill="#631700" points="192.1,135.0 188.5,155.5 182.5,155.5 186.1,135.0"/>
<polygon fill="#591700" points="186.1,135.0 182.5,155.5 175.5,155.5 179.1,135.0"/>
<polygon fill="#531700" points="179.1,135.0 175.5,155.5 167.5,155.5 171.1,135.0"/>
<polygon fill="#4a1700" points="171.1,135.0 167.5,155.5 157.5,155.5 161.1,135.0"/>
<polygon fill="#3f1700" points="161.1,135.0 157.5,155.5 142.5,155.5 146.1,135.0"/>
<polygon fill="#311700" points="146.1,135.0 142.5,155.5 120.5,155.5 124.1,135.0"/>
<polygon fill="#2e1700" points="124.1,135.0 120.5,155.5 -84.5,155.5 -80.9,135.0"/>
<polygon fill="#f11700" points="245.5,155.0 241.9,175.5 211.9,175.5 215.5,155.0"/>
<polygon fill="#e91700" points="215.5,155.0 211.9,175.5 208.9,175.5 212.5,155.0"/>
<polygon fill="#d51700" points="212.5,155.0 208.9,175.5 204.9,175.5 208.5,155.0"/>
<polygon fill="#b91700" points="208.5,155.0 204.9,175.5 201.9,175.5 205.5,155.0"/>
<polygon fill="#9a1700" points="205.5,155.0 201.9,175.5 197.9,175.5 201.5,155.0"/>
<polygon fill="#851700" points="201.5,155.0 197.9,175.5 193.9,175.5 197.5,155.0"/>
<polygon fill="#7a1700" points="197.5,155.0 193.9,175.5 189.9,175.5 193.5,155.0"/>
<polygon fill="#6f1700" points="193.5,155.0 189.9,175.5 184.9,175.5 188.5,155.0"/>
<polygon fill="#631700" points="188.5,155.0 184.9,175.5 178.9,175.5 182.5,155.0"/>
<polygon fill="#591700" points="182.5,155.0 178.9,175.5 171.9,175.5 175.5,155.0"/>
<polygon fill="#531700" points="175.5,155.0 171.9,175.5 163.9,175.5 167.5,155.0"/>
<polygon fill="#4a1700" points="167.5,155.0 163.9,175.5 153.9,175.5 157.5,155.0"/>
<polygon fill="#3f1700" points="157.5,155.0 153.9,175.5 138.9,175.5 142.5,155.0"/>
<polygon fill="#311700" points="142.5,155.0 138.9,175.5 116.9,175.5 120.5,155.0"/>
<polygon fill="#2e1700" points="120.5,155.0 116.9,175.5 -88.1,175.5 -84.5,155.0"/>
<polygon fill="#f11700" points="241.9,175.0 238.2,195.5 208.2,195.5 211.9,175.0"/>
<polygon fill="#e91700" points="211.9,175.0 208.2,195.5 205.2,195.5 208.9,175.0"/>
<polygon fill="#d51700" points="208.9,175.0 205.2,195.5 201.2,195.5 204.9,175.0"/>
<polygon fill="#b91700" points="204.9,175.0 201.2,195.5 198.2,195.5 201.9,175.0"/>
<polygon fill="#9a1700" points="201.9,175.0 198.2,195.5 194.2,195.5 197.9,175.0"/>
<polygon fill="#851700" points="197.9,175.0 194.2,195.5 190.2,195.5 193.9,175.0"/>
<polygon fill="#7a1700" points="193.9,175.0 190.2,195.5 186.2,195.5 189.9,175.0"/>
<polygon fill="#6f1700" points="189.9,175.0 186.2,195.5 181.2,195.5 184.9,175.0"/>
<polygon fill="#631700" points="184.9,175.0 181.2,195.5 175.2,195.5 178.9,175.0"/>
<polygon fill="#591700" points="178.9,175.0 175.2,195.5 168.2,195.5 171.9,175.0"/>
<polygon fill="#531700" points="171.9,175.0 168.2,195.5 160.2,195.5 163.9,175.0"/>
<polygon fill="#4a1700" points="163.9,175.0 160.2,195.5 150.2,195.5 153.9,175.0"/>
<polygon fill="#3f1700" points="153.9,175.0 150.2,195.5 135.2,195.5 138.9,175.0"/>
<polygon fill="#311700" points="138.9,175.0 135.2,195.5 113.2,195.5 116.9,175.0"/>
<polygon fill="#2e1700" points="116.9,175.0 113.2,195.5 -91.8,195.5 -88.1,175.0"/>
<polygon fill="#f11700" points="238.2,195.0 234.6,215.5 204.6,215.5 208.2,195.0"/>
<polygon fill="#e91700" points="208.2,195.0 204.6,215.5 201.6,215.5 205.2,195.0"/>
<polygon fill="#d51700" points="205.2,195.0 201.6,215.5 197.6,215.5 201.2,195.0"/>
<polygon fill="#b91700" points="201.2,195.0 197.6,215.5 194.6,215.5 198.2,195.0"/>
<polygon fill="#9a1700" points="198.2,195.0 194.6,215.5 190.6,215.5 194.2,195.0"/>
<polygon fill="#851700" points="194.2,195.0 190.6,215.5 186.6,215.5 190.2,195.0"/>
<polygon fill="#7a1700" points="190.2,195.0 186.6,215.5 182.6,215.5 186.2,195.0"/>
<polygon fill="#6f1700" points="186.2,195.0 182.6,215.5 177.6,215.5 181.2,195.0"/>
<polygon fill="#631700" points="181.2,195.0 177.6,215.5 171.6,215.5 175.2,195.0"/>
<polygon fill="#591700" points="175.2,195.0 171.6,215.5 164.6,215.5 168.2,195.0"/>
<polygon fill="#531700" points="168.2,195.0 164.6,215.5 156.6,215.5 160.2,195.0"/>
<polygon fill="#4a1700" points="160.2,195.0 156.6,215.5 146.6,215.5 150.2,195.0"/>
<polygon fill="#3f1700" points="150.2,195.0 146.6,215.5 131.6,215.5 135.2,195.0"/>
<polygon fill="#311700" points="135.2,195.0 131.6,215.5 109.6,215.5 113.2,195.0"/>
<polygon fill="#2e1700" points="113.2,195.0 109.6,215.5 -95.4,215.5 -91.8,195.0"/>
<polygon fill="#f11700" points="234.6,215.0 230.9,235.5 200.9,235.5 204.6,215.0"/>
<polygon fill="#e91700" points="204.6,215.0 200.9,235.5 197.9,235.5 201.6,215.0"/>
<polygon fill="#d51700" points="201.6,215.0 197.9,235.5 193.9,235.5 197.6,215.0"/>
<polygon fill="#b91700" points="197.6,215.0 193.9,235.5 190.9,235.5 194.6,215.0"/>
<polygon fill="#9a1700" points="194.6,215.0 190.9,235.5 186.9,235.5 190.6,215.0"/>
<polygon fill="#851700" points="190.6,215.0 186.9,235.5 182.9,235.5 186.6,215.0"/>
<polygon fill="#7a1700" points="186.6,215.0 182.9,235.5 178.9,235.5 182.6,215.0"/>
<polygon fill="#6f1700" points="182.6,215.0 178.9,235.5 173.9,235.5 177.6,215.0"/>
<polygon fill="#631700" points="177.6,215.0 173.9,235.5 167.9,235.5 171.6,215.0"/>
<polygon fill="#591700" points="171.6,215.0 167.9,235.5 160.9,235.5 164.6,215.0"/>
<polygon fill="#531700" points="164.6,215.0 160.9,235.5 152.9,235.5 156.6,215.0"/>
<polygon fill="#4a1700" points="156.6,215.0 152.9,235.5 142.9,235.5 146.6,215.0"/>
<polygon fill="#3f1700" points="146.6,215.0 142.9,235.5 127.9,235.5 131.6,215.0"/>
<polygon fill="#311700" points="131.6,215.0 127.9,235.5 105.9,235.5 109.6,215.0"/>
<polygon fill="#2e1700" points="109.6,215.0 105.9,235.5 -99.1,235.5 -95.4,215.0"/>
<polygon fill="#f21617" points="230.9,235.0 227.2,255.5 197.2,255.5 200.9,235.0"/>
<polygon fill="#ea1617" points="200.9,235.0 197.2,255.5 194.2,255.5 197.9,235.0"/>
<polygon fill="#d81617" points="197.9,235.0 194.2,255.5 190.2,255.5 193.9,235.0"/>
<polygon fill="#bd1717" points="193.9,235.0 190.2,255.5 187.2,255.5 190.9,235.0"/>
<polygon fill="#9e1a17" points="190.9,235.0 187.2,255.5 183.2,255.5 186.9,235.0"/>
<polygon fill="#881d17" points="186.9,235.0 183.2,255.5 179.2,255.5 182.9,235.0"/>
<polygon fill="#7d1e17" points="182.9,235.0 179.2,255.5 175.2,255.5 178.9,235.0"/>
<polygon fill="#711f17" points="178.9,235.0 175.2,255.5 170.2,255.5 173.9,235.0"/>
<polygon fill="#652117" points="173.9,235.0 170.2,255.5 164.2,255.5 167.9,235.0"/>
<polygon fill="#5b2217" points="167.9,235.0 164.2,255.5 157.2,255.5 160.9,235.0"/>
<polygon fill="#532317" points="160.9,235.0 157.2,255.5 149.2,255.5 152.9,235.0"/>
<polygon fill="#4a2417" points="152.9,235.0 149.2,255.5 139.2,255.5 142.9,235.0"/>
<polygon fill="#3f2617" points="142.9,235.0 139.2,255.5 124.2,255.5 127.9,235.0"/>
<polygon fill="#312717" points="127.9,235.0 124.2,255.5 102.2,255.5 105.9,235.0"/>
<polygon fill="#2e2717" points="105.9,235.0 102.2,255.5 -102.8,255.5 -99.1,235.0"/>
<polygon fill="#f41346" points="227.2,255.0 223.6,275.5 193.6,275.5 197.2,255.0"/>
<polygon fill="#ed1346" points="197.2,255.0 193.6,275.5 190.6,275.5 194.2,255.0"/>
<polygon fill="#dc1546" points="194.2,255.0 190.6,275.5 186.6,275.5 190.2,255.0"/>
<polygon fill="#c51846" points="190.2,255.0 186.6,275.5 183.6,275.5 187.2,255.0"/>
<polygon fill="#a61f46" points="187.2,255.0 183.6,275.5 179.6,275.5 183.2,255.0"/>
<polygon fill="#8e2746" points="183.2,255.0 179.6,275.5 175.6,275.5 179.2,255.0"/>
<polygon fill="#822b46" points="179.2,255.0 175.6,275.5 171.6,275.5 175.2,255.0"/>
<polygon fill="#762f46" points="175.2,255.0 171.6,275.5 166.6,275.5 170.2,255.0"/>
<polygon fill="#693346" points="170.2,255.0 166.6,275.5 160.6,275.5 164.2,255.0"/>
<polygon fill="#5e3746" points="164.2,255.0 160.6,275.5 153.6,275.5 157.2,255.0"/>
<polygon fill="#543b46" points="157.2,255.0 153.6,275.5 145.6,275.5 149.2,255.0"/>
<polygon fill="#4b3f46" points="149.2,255.0 145.6,275.5 135.6,275.5 139.2,255.0"/>
<polygon fill="#3f4346" points="139.2,255.0 135.6,275.5 120.6,275.5 124.2,255.0"/>
<polygon fill="#324546" points="124.2,255.0 120.6,275.5 98.6,275.5 102.2,255.0"/>
<polygon fill="#2e4646" points="102.2,255.0 98.6,275.5 -106.4,275.5 -102.8,255.0"/>
<polygon fill="#f61074" points="223.6,275.0 219.9,295.5 189.9,295.5 193.6,275.0"/>
<polygon fill="#f01074" points="193.6,275.0 189.9,295.5 186.9,295.5 190.6,275.0"/>
<polygon fill="#e11374" points="190.6,275.0 186.9,295.5 182.9,295.5 186.6,275.0"/>
<polygon fill="#cd1874" points="186.6,275.0 182.9,295.5 179.9,295.5 183.6,275.0"/>
<polygon fill="#af2474" points="183.6,275.0 179.9,295.5 175.9,295.5 179.6,275.0"/>
<polygon fill="#953274" points="179.6,275.0 175.9,295.5 171.9,295.5 175.6,275.0"/>
<polygon fill="#883874" points="175.6,275.0 171.9,295.5 167.9,295.5 171.6,275.0"/>
<polygon fill="#7b3f74" points="171.6,275.0 167.9,295.5 162.9,295.5 166.6,275.0"/>
<polygon fill="#6d4674" points="166.6,275.0 162.9,295.5 156.9,295.5 160.6,275.0"/>
<polygon fill="#614d74" points="160.6,275.0 156.9,295.5 149.9,295.5 153.6,275.0"/>
<polygon fill="#565474" points="153.6,275.0 149.9,295.5 141.9,295.5 145.6,275.0"/>
<polygon fill="#4b5a74" points="145.6,275.0 141.9,295.5 131.9,295.5 135.6,275.0"/>
<polygon fill="#3f6074" points="135.6,275.0 131.9,295.5 116.9,295.5 120.6,275.0"/>
<polygon fill="#326474" points="120.6,275.0 116.9,295.5 94.9,295.5 98.6,275.0"/>
<polygon fill="#2f6674" points="98.6,275.0 94.9,295.5 -110.1,295.5 -106.4,275.0"/>
<polygon fill="#f80da2" points="219.9,295.0 216.2,315.5 186.2,315.5 189.9,295.0"/>
<polygon fill="#f30da2" points="189.9,295.0 186.2,315.5 183.2,315.5 186.9,295.0"/>
<polygon fill="#e611a2" points="186.9,295.0 183.2,315.5 179.2,315.5 182.9,295.0"/>
<polygon fill="#d418a2" points="182.9,295.0 179.2,315.5 176.2,315.5 179.9,295.0"/>
<polygon fill="#b729a2" points="179.9,295.0 176.2,315.5 172.2,315.5 175.9,295.0"/>
<polygon fill="#9b3da2" points="175.9,295.0 172.2,315.5 168.2,315.5 171.9,295.0"/>
<polygon fill="#8e45a2" points="171.9,295.0 168.2,315.5 164.2,315.5 167.9,295.0"/>
<polygon fill="#804fa2" points="167.9,295.0 164.2,315.5 159.2,315.5 162.9,295.0"/>
<polygon fill="#7159a2" points="162.9,295.0 159.2,315.5 153.2,315.5 156.9,295.0"/>
<polygon fill="#6462a2" points="156.9,295.0 153.2,315.5 146.2,315.5 149.9,295.0"/>
<polygon fill="#576ca2" points="149.9,295.0 146.2,315.5 138.2,315.5 141.9,295.0"/>
<polygon fill="#4b74a2" points="141.9,295.0 138.2,315.5 128.2,315.5 131.9,295.0"/>
<polygon fill="#3e7ca2" points="131.9,295.0 128.2,315.5 113.2,315.5 116.9,295.0"/>
<polygon fill="#3382a2" points="116.9,295.0 113.2,315.5 91.2,315.5 94.9,295.0"/>
<polygon fill="#2f85a2" points="94.9,295.0 91.2,315.5 -113.8,315.5 -110.1,295.0"/>
<polygon fill="#fb0ad1" points="216.2,315.0 212.5,335.5 182.5,335.5 186.2,315.0"/>
<polygon fill="#f60ad1" points="186.2,315.0 182.5,335.5 179.5,335.5 183.2,315.0"/>
<polygon fill="#eb0fd1" points="183.2,315.0 179.5,335.5 175.5,335.5 179.2,315.0"/>
<polygon fill="#dc18d1" points="179.2,315.0 175.5,335.5 172.5,335.5 176.2,315.0"/>
<polygon fill="#bf2fd1" points="176.2,315.0 172.5,335.5 168.5,335.5 172.2,315.0"/>
<polygon fill="#a148d1" points="172.2,315.0 168.5,335.5 164.5,335.5 168.2,315.0"/>
<polygon fill="#9353d1" points="168.2,315.0 164.5,335.5 160.5,335.5 164.2,315.0"/>
<polygon fill="#845fd1" points="164.2,315.0 160.5,335.5 155.5,335.5 159.2,315.0"/>
<polygon fill="#756cd1" points="159.2,315.0 155.5,335.5 149.5,335.5 153.2,315.0"/>
<polygon fill="#6778d1" points="153.2,315.0 149.5,335.5 142.5,335.5 146.2,315.0"/>
<polygon fill="#5884d1" points="146.2,315.0 142.5,335.5 134.5,335.5 138.2,315.0"/>
<polygon fill="#4b8fd1" points="138.2,315.0 134.5,335.5 124.5,335.5 128.2,315.0"/>
<polygon fill="#3e99d1" points="128.2,315.0 124.5,335.5 109.5,335.5 113.2,315.0"/>
<polygon fill="#33a1d1" points="113.2,315.0 109.5,335.5 87.5,335.5 91.2,315.0"/>
<polygon fill="#2fa5d1" points="91.2,315.0 87.5,335.5 -117.5,335.5 -113.8,315.0"/>
<polygon fill="#fd07ff" points="212.5,335.0 208.6,355.5 178.6,355.5 182.5,335.0"/>
<polygon fill="#f907ff" points="182.5,335.0 178.6,355.5 175.6,355.5 179.5,335.0"/>
<polygon fill="#f00dff" points="179.5,335.0 175.6,355.5 171.6,355.5 175.5,335.0"/>
<polygon fill="#e419ff" points="175.5,335.0 171.6,355.5 168.6,355.5 172.5,335.0"/>
<polygon fill="#c734ff" points="172.5,335.0 168.6,355.5 164.6,355.5 168.5,335.0"/>
<polygon fill="#a753ff" points="168.5,335.0 164.6,355.5 160.6,355.5 164.5,335.0"/>
<polygon fill="#9960ff" points="164.5,335.0 160.6,355.5 156.6,355.5 160.5,335.0"/>
<polygon fill="#896fff" points="160.5,335.0 156.6,355.5 151.6,355.5 155.5,335.0"/>
<polygon fill="#797fff" points="155.5,335.0 151.6,355.5 145.6,355.5 149.5,335.0"/>
<polygon fill="#698dff" points="149.5,335.0 145.6,355.5 138.6,355.5 142.5,335.0"/>
<polygon fill="#5a9cff" points="142.5,335.0 138.6,355.5 130.6,355.5 134.5,335.0"/>
<polygon fill="#4ca9ff" points="134.5,335.0 130.6,355.5 120.6,355.5 124.5,335.0"/>
<polygon fill="#3eb6ff" points="124.5,335.0 120.6,355.5 105.6,355.5 109.5,335.0"/>
<polygon fill="#34c0ff" points="109.5,335.0 105.6,355.5 83.6,355.5 87.5,335.0"/>
<polygon fill="#2fc4ff" points="87.5,335.0 83.6,355.5 -121.4,355.5 -117.5,335.0"/>
<polygon fill="#fd07ff" points="208.6,355.0 204.7,375.5 174.7,375.5 178.6,355.0"/>
<polygon fill="#f907ff" points="178.6,355.0 174.7,375.5 171.7,375.5 175.6,355.0"/>
<polygon fill="#f00dff" points="175.6,355.0 171.7,375.5 167.7,375.5 171.6,355.0"/>
<polygon fill="#e419ff" points="171.6,355.0 167.7,375.5 164.7,375.5 168.6,355.0"/>
<polygon fill="#c734ff" points="168.6,355.0 164.7,375.5 160.7,375.5 164.6,355.0"/>
<polygon fill="#a753ff" points="164.6,355.0 160.7,375.5 156.7,375.5 160.6,355.0"/>
<polygon fill="#9960ff" points="160.6,355.0 156.7,375.5 152.7,375.5 156.6,355.0"/>
<polygon fill="#896fff" points="156.6,355.0 152.7,375.5 147.7,375.5 151.6,355.0"/>
<polygon fill="#797fff" points="151.6,355.0 147.7,375.5 141.7,375.5 145.6,355.0"/>
<polygon fill="#698dff" points="145.6,355.0 141.7,375.5 134.7,375.5 138.6,355.0"/>
<polygon fill="#5a9cff" points="138.6,355.0 134.7,375.5 126.7,375.5 130.6,355.0"/>
<polygon fill="#4ca9ff" points="130.6,355.0 126.7,375.5 116.7,375.5 120.6,355.0"/>
<polygon fill="#3eb6ff" points="120.6,355.0 116.7,375.5 101.7,375.5 105.6,355.0"/>
<polygon fill="#34c0ff" points="105.6,355.0 101.7,375.5 79.7,375.5 83.6,355.0"/>
<polygon fill="#2fc4ff" points="83.6,355.0 79.7,375.5 -125.3,375.5 -121.4,355.0"/>
<polygon fill="#fd07ff" points="204.7,375.0 200.7,395.5 170.7,395.5 174.7,375.0"/>
<polygon fill="#f907ff" points="174.7,375.0 170.7,395.5 167.7,395.5 171.7,375.0"/>
<polygon fill="#f00dff" points="171.7,375.0 167.7,395.5 163.7,395.5 167.7,375.0"/>
<polygon fill="#e419ff" points="167.7,375.0 163.7,395.5 160.7,395.5 164.7,375.0"/>
<polygon fill="#c734ff" points="164.7,375.0 160.7,395.5 156.7,395.5 160.7,375.0"/>
<polygon fill="#a753ff" points="160.7,375.0 156.7,395.5 152.7,395.5 156.7,375.0"/>
<polygon fill="#9960ff" points="156.7,375.0 152.7,395.5 148.7,395.5 152.7,375.0"/>
<polygon fill="#896fff" points="152.7,375.0 148.7,395.5 143.7,395.5 147.7,375.0"/>
<polygon fill="#797fff" points="147.7,375.0 143.7,395.5 137.7,395.5 141.7,375.0"/>
<polygon fill="#698dff" points="141.7,375.0 137.7,395.5 130.7,395.5 134.7,375.0"/>
<polygon fill="#5a9cff" points="134.7,375.0 130.7,395.5 122.7,395.5 126.7,375.0"/>
<polygon fill="#4ca9ff" points="126.7,375.0 122.7,395.5 112.7,395.5 116.7,375.0"/>
<polygon fill="#3eb6ff" points="116.7,375.0 112.7,395.5 97.7,395.5 101.7,375.0"/>
<polygon fill="#34c0ff" points="101.7,375.0 97.7,395.5 75.7,395.5 79.7,375.0"/>
<polygon fill="#2fc4ff" points="79.7,375.0 75.7,395.5 -129.3,395.5 -125.3,375.0"/>
<polygon fill="#fd07ff" points="200.7,395.0 196.8,415.5 166.8,415.5 170.7,395.0"/>
<polygon fill="#f907ff" points="170.7,395.0 166.8,415.5 163.8,415.5 167.7,395.0"/>
<polygon fill="#f00dff" points="167.7,395.0 163.8,415.5 159.8,415.5 163.7,395.0"/>
<polygon fill="#e419ff" points="163.7,395.0 159.8,415.5 156.8,415.5 160.7,395.0"/>
<polygon fill="#c734ff" points="160.7,395.0 156.8,415.5 152.8,415.5 156.7,395.0"/>
<polygon fill="#a753ff" points="156.7,395.0 152.8,415.5 148.8,415.5 152.7,395.0"/>
<polygon fill="#9960ff" points="152.7,395.0 148.8,415.5 144.8,415.5 148.7,395.0"/>
<polygon fill="#896fff" points="148.7,395.0 144.8,415.5 139.8,415.5 143.7,395.0"/>
<polygon fill="#797fff" points="143.7,395.0 139.8,415.5 133.8,415.5 137.7,395.0"/>
<polygon fill="#698dff" points="137.7,395.0 133.8,415.5 126.8,415.5 130.7,395.0"/>
<polygon fill="#5a9cff" points="130.7,395.0 126.8,415.5 118.8,415.5 122.7,395.0"/>
<polygon fill="#4ca9ff" points="122.7,395.0 118.8,415.5 108.8,415.5 112.7,395.0"/>
<polygon fill="#3eb6ff" points="112.7,395.0 108.8,415.5 93.8,415.5 97.7,395.0"/>
<polygon fill="#34c0ff" points="97.7,395.0 93.8,415.5 71.8,415.5 75.7,395.0"/>
<polygon fill="#2fc4ff" points="75.7,395.0 71.8,415.5 -133.2,415.5 -129.3,395.0"/>
<polygon fill="#fd07ff" points="196.8,415.0 192.8,435.5 162.8,435.5 166.8,415.0"/>
<polygon fill="#f907ff" points="166.8,415.0 162.8,435.5 159.8,435.5 163.8,415.0"/>
<polygon fill="#f00dff" points="163.8,415.0 159.8,435.5 155.8,435.5 159.8,415.0"/>
<polygon fill="#e419ff" points="159.8,415.0 155.8,435.5 152.8,435.5 156.8,415.0"/>
<polygon fill="#c734ff" points="156.8,415.0 152.8,435.5 148.8,435.5 152.8,415.0"/>
<polygon fill="#a753ff" points="152.8,415.0 148.8,435.5 144.8,435.5 148.8,415.0"/>
<polygon fill="#9960ff" points="148.8,415.0 144.8,435.5 140.8,435.5 144.8,415.0"/>
<polygon fill="#896fff" points="144.8,415.0 140.8,435.5 135.8,435.5 139.8,415.0"/>
<polygon fill="#797fff" points="139.8,415.0 135.8,435.5 129.8,435.5 133.8,415.0"/>
<polygon fill="#698dff" points="133.8,415.0 129.8,435.5 122.8,435.5 126.8,415.0"/>
<polygon fill="#5a9cff" points="126.8,415.0 122.8,435.5 114.8,435.5 118.8,415.0"/>
<polygon fill="#4ca9ff" points="118.8,415.0 114.8,435.5 104.8,435.5 108.8,415.0"/>
<polygon fill="#3eb6ff" points="108.8,415.0 104.8,435.5 89.8,435.5 93.8,415.0"/>
<polygon fill="#34c0ff" points="93.8,415.0 89.8,435.5 67.8,435.5 71.8,415.0"/>
<polygon fill="#2fc4ff" points="71.8,415.0 67.8,435.5 -137.2,435.5 -133.2,415.0"/>
<polygon fill="#fd07ff" points="192.8,435.0 188.9,455.5 158.9,455.5 162.8,435.0"/>
<polygon fill="#f907ff" points="162.8,435.0 158.9,455.5 155.9,455.5 159.8,435.0"/>
<polygon fill="#f00dff" points="159.8,435.0 155.9,455.5 151.9,455.5 155.8,435.0"/>
<polygon fill="#e419ff" points="155.8,435.0 151.9,455.5 148.9,455.5 152.8,435.0"/>
<polygon fill="#c734ff" points="152.8,435.0 148.9,455.5 144.9,455.5 148.8,435.0"/>
<polygon fill="#a753ff" points="148.8,435.0 144.9,455.5 140.9,455.5 144.8,435.0"/>
<polygon fill="#9960ff" points="144.8,435.0 140.9,455.5 136.9,455.5 140.8,435.0"/>
<polygon fill="#896fff" points="140.8,435.0 136.9,455.5 131.9,455.5 135.8,435.0"/>
<polygon fill="#797fff" points="135.8,435.0 131.9,455.5 125.9,455.5 129.8,435.0"/>
<polygon fill="#698dff" points="129.8,435.0 125.9,455.5 118.9,455.5 122.8,435.0"/>
<polygon fill="#5a9cff" points="122.8,435.0 118.9,455.5 110.9,455.5 114.8,435.0"/>
<polygon fill="#4ca9ff" points="114.8,435.0 110.9,455.5 100.9,455.5 104.8,435.0"/>
<polygon fill="#3eb6ff" points="104.8,435.0 100.9,455.5 85.9,455.5 89.8,435.0"/>
<polygon fill="#34c0ff" points="89.8,435.0 85.9,455.5 63.9,455.5 67.8,435.0"/>
<polygon fill="#2fc4ff" points="67.8,435.0 63.9,455.5 -141.1,455.5 -137.2,435.0"/>
<polygon fill="#fd07ff" points="188.9,455.0 185.0,475.5 155.0,475.5 158.9,455.0"/>
<polygon fill="#f907ff" points="158.9,455.0 155.0,475.5 152.0,475.5 155.9,455.0"/>
<polygon fill="#f00dff" points="155.9,455.0 152.0,475.5 148.0,475.5 151.9,455.0"/>
<polygon fill="#e419ff" points="151.9,455.0 148.0,475.5 145.0,475.5 148.9,455.0"/>
<polygon fill="#c734ff" points="148.9,455.0 145.0,475.5 141.0,475.5 144.9,455.0"/>
<polygon fill="#a753ff" points="144.9,455.0 141.0,475.5 137.0,475.5 140.9,455.0"/>
<polygon fill="#9960ff" points="140.9,455.0 137.0,475.5 133.0,475.5 136.9,455.0"/>
<polygon fill="#896fff" points="136.9,455.0 133.0,475.5 128.0,475.5 131.9,455.0"/>
<polygon fill="#797fff" points="131.9,455.0 128.0,475.5 122.0,475.5 125.9,455.0"/>
<polygon fill="#698dff" points="125.9,455.0 122.0,475.5 115.0,475.5 118.9,455.0"/>
<polygon fill="#5a9cff" points="118.9,455.0 115.0,475.5 107.0,475.5 110.9,455.0"/>
<polygon fill="#4ca9ff" points="110.9,455.0 107.0,475.5 97.0,475.5 100.9,455.0"/>
<polygon fill="#3eb6ff" points="100.9,455.0 97.0,475.5 82.0,475.5 85.9,455.0"/>
<polygon fill="#34c0ff" points="85.9,455.0 82.0,475.5 60.0,475.5 63.9,455.0"/>
<polygon fill="#2fc4ff" points="63.9,455.0 60.0,475.5 -145.0,475.5 -141.1,455.0"/>
<polygon fill="#fd07ff" points="185.0,475.0 180.9,495.5 150.9,495.5 155.0,475.0"/>
<polygon fill="#f907ff" points="155.0,475.0 150.9,495.5 147.9,495.5 152.0,475.0"/>
<polygon fill="#f00dff" points="152.0,475.0 147.9,495.5 143.9,495.5 148.0,475.0"/>
<polygon fill="#e419ff" points="148.0,475.0 143.9,495.5 140.9,495.5 145.0,475.0"/>
<polygon fill="#c734ff" points="145.0,475.0 140.9,495.5 136.9,495.5 141.0,475.0"/>
<polygon fill="#a753ff" points="141.0,475.0 136.9,495.5 132.9,495.5 137.0,475.0"/>
<polygon fill="#9960ff" points="137.0,475.0 132.9,495.5 128.9,495.5 133.0,475.0"/>
<polygon fill="#896fff" points="133.0,475.0 128.9,495.5 123.9,495.5 128.0,475.0"/>
<polygon fill="#797fff" points="128.0,475.0 123.9,495.5 117.9,495.5 122.0,475.0"/>
<polygon fill="#698dff" points="122.0,475.0 117.9,495.5 110.9,495.5 115.0,475.0"/>
<polygon fill="#5a9cff" points="115.0,475.0 110.9,495.5 102.9,495.5 107.0,475.0"/>
<polygon fill="#4ca9ff" points="107.0,475.0 102.9,495.5 92.9,495.5 97.0,475.0"/>
<polygon fill="#3eb6ff" points="97.0,475.0 92.9,495.5 77.9,495.5 82.0,475.0"/>
<polygon fill="#34c0ff" points="82.0,475.0 77.9,495.5 55.9,495.5 60.0,475.0"/>
<polygon fill="#2fc4ff" points="60.0,475.0 55.9,495.5 -149.1,495.5 -145.0,475.0"/>
<polygon fill="#fd07ff" points="180.9,495.0 176.8,515.5 146.8,515.5 150.9,495.0"/>
<polygon fill="#f907ff" points="150.9,495.0 146.8,515.5 143.8,515.5 147.9,495.0"/>
<polygon fill="#f00dff" points="147.9,495.0 143.8,515.5 139.8,515.5 143.9,495.0"/>
<polygon fill="#e419ff" points="143.9,495.0 139.8,515.5 136.8,515.5 140.9,495.0"/>
<polygon fill="#c734ff" points="140.9,495.0 136.8,515.5 132.8,515.5 136.9,495.0"/>
<polygon fill="#a753ff" points="136.9,495.0 132.8,515.5 128.8,515.5 132.9,495.0"/>
<polygon fill="#9960ff" points="132.9,495.0 128.8,515.5 124.8,515.5 128.9,495.0"/>
<polygon fill="#896fff" points="128.9,495.0 124.8,515.5 119.8,515.5 123.9,495.0"/>
<polygon fill="#797fff" points="123.9,495.0 119.8,515.5 113.8,515.5 117.9,495.0"/>
<polygon fill="#698dff" points="117.9,495.0 113.8,515.5 106.8,515.5 110.9,495.0"/>
<polygon fill="#5a9cff" points="110.9,495.0 106.8,515.5 98.8,515.5 102.9,495.0"/>
<polygon fill="#4ca9ff" points="102.9,495.0 98.8,515.5 88.8,515.5 92.9,495.0"/>
<polygon fill="#3eb6ff" points="92.9,495.0 88.8,515.5 73.8,515.5 77.9,495.0"/>
<polygon fill="#34c0ff" points="77.9,495.0 73.8,515.5 51.8,515.5 55.9,495.0"/>
<polygon fill="#2fc4ff" points="55.9,495.0 51.8,515.5 -153.2,515.5 -149.1,495.0"/>
<polygon fill="#fd07ff" points="176.8,515.0 172.6,535.5 142.6,535.5 146.8,515.0"/>
<polygon fill="#f907ff" points="146.8,515.0 142.6,535.5 139.6,535.5 143.8,515.0"/>
<polygon fill="#f00dff" points="143.8,515.0 139.6,535.5 135.6,535.5 139.8,515.0"/>
<polygon fill="#e419ff" points="139.8,515.0 135.6,535.5 132.6,535.5 136.8,515.0"/>
<polygon fill="#c734ff" points="136.8,515.0 132.6,535.5 128.6,535.5 132.8,515.0"/>
<polygon fill="#a753ff" points="132.8,515.0 128.6,535.5 124.6,535.5 128.8,515.0"/>
<polygon fill="#9960ff" points="128.8,515.0 124.6,535.5 120.6,535.5 124.8,515.0"/>
<polygon fill="#896fff" points="124.8,515.0 120.6,535.5 115.6,535.5 119.8,515.0"/>
<polygon fill="#797fff" points="119.8,515.0 115.6,535.5 109.6,535.5 113.8,515.0"/>
<polygon fill="#698dff" points="113.8,515.0 109.6,535.5 102.6,535.5 106.8,515.0"/>
<polygon fill="#5a9cff" points="106.8,515.0 102.6,535.5 94.6,535.5 98.8,515.0"/>
<polygon fill="#4ca9ff" points="98.8,515.0 94.6,535.5 84.6,535.5 88.8,515.0"/>
<polygon fill="#3eb6ff" points="88.8,515.0 84.6,535.5 69.6,535.5 73.8,515.0"/>
<polygon fill="#34c0ff" points="73.8,515.0 69.6,535.5 47.6,535.5 51.8,515.0"/>
<polygon fill="#2fc4ff" points="51.8,515.0 47.6,535.5 -157.4,535.5 -153.2,515.0"/>
<polygon fill="#fd07ff" points="172.6,535.0 168.5,555.5 138.5,555.5 142.6,535.0"/>
<polygon fill="#f907ff" points="142.6,535.0 138.5,555.5 135.5,555.5 139.6,535.0"/>
<polygon fill="#f00dff" points="139.6,535.0 135.5,555.5 131.5,555.5 135.6,535.0"/>
<polygon fill="#e419ff" points="135.6,535.0 131.5,555.5 128.5,555.5 132.6,535.0"/>
<polygon fill="#c734ff" points="132.6,535.0 128.5,555.5 124.5,555.5 128.6,535.0"/>
<polygon fill="#a753ff" points="128.6,535.0 124.5,555.5 120.5,555.5 124.6,535.0"/>
<polygon fill="#9960ff" points="124.6,535.0 120.5,555.5 116.5,555.5 120.6,535.0"/>
<polygon fill="#896fff" points="120.6,535.0 116.5,555.5 111.5,555.5 115.6,535.0"/>
<polygon fill="#797fff" points="115.6,535.0 111.5,555.5 105.5,555.5 109.6,535.0"/>
<polygon fill="#698dff" points="109.6,535.0 105.5,555.5 98.5,555.5 102.6,535.0"/>
<polygon fill="#5a9cff" points="102.6,535.0 98.5,555.5 90.5,555.5 94.6,535.0"/>
<polygon fill="#4ca9ff" points="94.6,535.0 90.5,555.5 80.5,555.5 84.6,535.0"/>
<polygon fill="#3eb6ff" points="84.6,535.0 80.5,555.5 65.5,555.5 69.6,535.0"/>
<polygon fill="#34c0ff" points="69.6,535.0 65.5,555.5 43.5,555.5 47.6,535.0"/>
<polygon fill="#2fc4ff" points="47.6,535.0 43.5,555.5 -161.5,555.5 -157.4,535.0"/>
<polygon fill="#fd07ff" points="168.5,555.0 164.4,575.5 134.4,575.5 138.5,555.0"/>
<polygon fill="#f907ff" points="138.5,555.0 134.4,575.5 131.4,575.5 135.5,555.0"/>
<polygon fill="#f00dff" points="135.5,555.0 131.4,575.5 127.4,575.5 131.5,555.0"/>
<polygon fill="#e419ff" points="131.5,555.0 127.4,575.5 124.4,575.5 128.5,555.0"/>
<polygon fill="#c734ff" points="128.5,555.0 124.4,575.5 120.4,575.5 124.5,555.0"/>
<polygon fill="#a753ff" points="124.5,555.0 120.4,575.5 116.4,575.5 120.5,555.0"/>
<polygon fill="#9960ff" points="120.5,555.0 116.4,575.5 112.4,575.5 116.5,555.0"/>
<polygon fill="#896fff" points="116.5,555.0 112.4,575.5 107.4,575.5 111.5,555.0"/>
<polygon fill="#797fff" points="111.5,555.0 107.4,575.5 101.4,575.5 105.5,555.0"/>
<polygon fill="#698dff" points="105.5,555.0 101.4,575.5 94.4,575.5 98.5,555.0"/>
<polygon fill="#5a9cff" points="98.5,555.0 94.4,575.5 86.4,575.5 90.5,555.0"/>
<polygon fill="#4ca9ff" points="90.5,555.0 86.4,575.5 76.4,575.5 80.5,555.0"/>
<polygon fill="#3eb6ff" points="80.5,555.0 76.4,575.5 61.4,575.5 65.5,555.0"/>
<polygon fill="#34c0ff" points="65.5,555.0 61.4,575.5 39.4,575.5 43.5,555.0"/>
<polygon fill="#2fc4ff" points="43.5,555.0 39.4,575.5 -165.6,575.5 -161.5,555.0"/>
<polygon fill="#fd07ff" points="164.4,575.0 160.2,595.5 130.2,595.5 134.4,575.0"/>
<polygon fill="#f907ff" points="134.4,575.0 130.2,595.5 127.2,595.5 131.4,575.0"/>
<polygon fill="#f00dff" points="131.4,575.0 127.2,595.5 123.2,595.5 127.4,575.0"/>
<polygon fill="#e419ff" points="127.4,575.0 123.2,595.5 120.2,595.5 124.4,575.0"/>
<polygon fill="#c734ff" points="124.4,575.0 120.2,595.5 116.2,595.5 120.4,575.0"/>
<polygon fill="#a753ff" points="120.4,575.0 116.2,595.5 112.2,595.5 116.4,575.0"/>
<polygon fill="#9960ff" points="116.4,575.0 112.2,595.5 108.2,595.5 112.4,575.0"/>
<polygon fill="#896fff" points="112.4,575.0 108.2,595.5 103.2,595.5 107.4,575.0"/>
<polygon fill="#797fff" points="107.4,575.0 103.2,595.5 97.2,595.5 101.4,575.0"/>
<polygon fill="#698dff" points="101.4,575.0 97.2,595.5 90.2,595.5 94.4,575.0"/>
<polygon fill="#5a9cff" points="94.4,575.0 90.2,595.5 82.2,595.5 86.4,575.0"/>
<polygon fill="#4ca9ff" points="86.4,575.0 82.2,595.5 72.2,595.5 76.4,575.0"/>
<polygon fill="#3eb6ff" points="76.4,575.0 72.2,595.5 57.2,595.5 61.4,575.0"/>
<polygon fill="#34c0ff" points="61.4,575.0 57.2,595.5 35.2,595.5 39.4,575.0"/>
<polygon fill="#2fc4ff" points="39.4,575.0 35.2,595.5 -169.8,595.5 -165.6,575.0"/>
<polygon fill="#fd07ff" points="160.2,595.0 156.1,615.5 126.1,615.5 130.2,595.0"/>
<polygon fill="#f907ff" points="130.2,595.0 126.1,615.5 123.1,615.5 127.2,595.0"/>
<polygon fill="#f00dff" points="127.2,595.0 123.1,615.5 119.1,615.5 123.2,595.0"/>
<polygon fill="#e419ff" points="123.2,595.0 119.1,615.5 116.1,615.5 120.2,595.0"/>
<polygon fill="#c734ff" points="120.2,595.0 116.1,615.5 112.1,615.5 116.2,595.0"/>
<polygon fill="#a753ff" points="116.2,595.0 112.1,615.5 108.1,615.5 112.2,595.0"/>
<polygon fill="#9960ff" points="112.2,595.0 108.1,615.5 104.1,615.5 108.2,595.0"/>
<polygon fill="#896fff" points="108.2,595.0 104.1,615.5 99.1,615.5 103.2,595.0"/>
<polygon fill="#797fff" points="103.2,595.0 99.1,615.5 93.1,615.5 97.2,595.0"/>
<polygon fill="#698dff" points="97.2,595.0 93.1,615.5 86.1,615.5 90.2,595.0"/>
<polygon fill="#5a9cff" points="90.2,595.0 86.1,615.5 78.1,615.5 82.2,595.0"/>
<polygon fill="#4ca9ff" points="82.2,595.0 78.1,615.5 68.1,615.5 72.2,595.0"/>
<polygon fill="#3eb6ff" points="72.2,595.0 68.1,615.5 53.1,615.5 57.2,595.0"/>
<polygon fill="#34c0ff" points="57.2,595.0 53.1,615.5 31.1,615.5 35.2,595.0"/>
<polygon fill="#2fc4ff" points="35.2,595.0 31.1,615.5 -173.9,615.5 -169.8,595.0"/>
<polygon fill="#fd07ff" points="156.1,615.0 151.9,635.5 121.9,635.5 126.1,615.0"/>
<polygon fill="#f907ff" points="126.1,615.0 121.9,635.5 118.9,635.5 123.1,615.0"/>
<polygon fill="#f00dff" points="123.1,615.0 118.9,635.5 114.9,635.5 119.1,615.0"/>
<polygon fill="#e419ff" points="119.1,615.0 114.9,635.5 111.9,635.5 116.1,615.0"/>
<polygon fill="#c734ff" points="116.1,615.0 111.9,635.5 107.9,635.5 112.1,615.0"/>
<polygon fill="#a753ff" points="112.1,615.0 107.9,635.5 103.9,635.5 108.1,615.0"/>
<polygon fill="#9960ff" points="108.1,615.0 103.9,635.5 99.9,635.5 104.1,615.0"/>
<polygon fill="#896fff" points="104.1,615.0 99.9,635.5 94.9,635.5 99.1,615.0"/>
<polygon fill="#797fff" points="99.1,615.0 94.9,635.5 88.9,635.5 93.1,615.0"/>
<polygon fill="#698dff" points="93.1,615.0 88.9,635.5 81.9,635.5 86.1,615.0"/>
<polygon fill="#5a9cff" points="86.1,615.0 81.9,635.5 73.9,635.5 78.1,615.0"/>
<polygon fill="#4ca9ff" points="78.1,615.0 73.9,635.5 63.9,635.5 68.1,615.0"/>
<polygon fill="#3eb6ff" points="68.1,615.0 63.9,635.5 48.9,635.5 53.1,615.0"/>
<polygon fill="#34c0ff" points="53.1,615.0 48.9,635.5 26.9,635.5 31.1,615.0"/>
<polygon fill="#2fc4ff" points="31.1,615.0 26.9,635.5 -178.1,635.5 -173.9,615.0"/>
<polygon fill="#fd07ff" points="151.9,635.0 147.4,655.5 117.4,655.5 121.9,635.0"/>
<polygon fill="#f907ff" points="121.9,635.0 117.4,655.5 114.4,655.5 118.9,635.0"/>
<polygon fill="#f00dff" points="118.9,635.0 114.4,655.5 110.4,655.5 114.9,635.0"/>
<polygon fill="#e419ff" points="114.9,635.0 110.4,655.5 107.4,655.5 111.9,635.0"/>
<polygon fill="#c932ff" points="111.9,635.0 107.4,655.5 103.4,655.5 107.9,635.0"/>
<polygon fill="#a951ff" points="107.9,635.0 103.4,655.5 99.4,655.5 103.9,635.0"/>
<polygon fill="#9b5eff" points="103.9,635.0 99.4,655.5 95.4,655.5 99.9,635.0"/>
<polygon fill="#8b6dff" points="99.9,635.0 95.4,655.5 90.4,655.5 94.9,635.0"/>
<polygon fill="#7a7dff" points="94.9,635.0 90.4,655.5 84.4,655.5 88.9,635.0"/>
<polygon fill="#6b8bff" points="88.9,635.0 84.4,655.5 77.4,655.5 81.9,635.0"/>
<polygon fill="#5b9aff" points="81.9,635.0 77.4,655.5 69.4,655.5 73.9,635.0"/>
<polygon fill="#4da8ff" points="73.9,635.0 69.4,655.5 59.4,655.5 63.9,635.0"/>
<polygon fill="#40b5ff" points="63.9,635.0 59.4,655.5 44.4,655.5 48.9,635.0"/>
<polygon fill="#36beff" points="48.9,635.0 44.4,655.5 22.4,655.5 26.9,635.0"/>
<polygon fill="#31c2ff" points="26.9,635.0 22.4,655.5 -182.6,655.5 -178.1,635.0"/>
<polygon fill="#fd07ff" points="147.4,655.0 142.8,675.5 112.8,675.5 117.4,655.0"/>
<polygon fill="#f907ff" points="117.4,655.0 112.8,675.5 109.8,675.5 114.4,655.0"/>
<polygon fill="#f00dff" points="114.4,655.0 109.8,675.5 105.8,675.5 110.4,655.0"/>
<polygon fill="#e419ff" points="110.4,655.0 105.8,675.5 102.8,675.5 107.4,655.0"/>
<polygon fill="#d02bff" points="107.4,655.0 102.8,675.5 98.8,675.5 103.4,655.0"/>
<polygon fill="#b04aff" points="103.4,655.0 98.8,675.5 94.8,675.5 99.4,655.0"/>
<polygon fill="#a258ff" points="99.4,655.0 94.8,675.5 90.8,675.5 95.4,655.0"/>
<polygon fill="#9266ff" points="95.4,655.0 90.8,675.5 85.8,675.5 90.4,655.0"/>
<polygon fill="#8176ff" points="90.4,655.0 85.8,675.5 79.8,675.5 84.4,655.0"/>
<polygon fill="#7285ff" points="84.4,655.0 79.8,675.5 72.8,675.5 77.4,655.0"/>
<polygon fill="#6294ff" points="77.4,655.0 72.8,675.5 64.8,675.5 69.4,655.0"/>
<polygon fill="#54a1ff" points="69.4,655.0 64.8,675.5 54.8,675.5 59.4,655.0"/>
<polygon fill="#47aeff" points="59.4,655.0 54.8,675.5 39.8,675.5 44.4,655.0"/>
<polygon fill="#3db8ff" points="44.4,655.0 39.8,675.5 17.8,675.5 22.4,655.0"/>
<polygon fill="#38bcff" points="22.4,655.0 17.8,675.5 -187.2,675.5 -182.6,655.0"/>
<polygon fill="#fd07ff" points="142.8,675.0 138.3,695.5 108.3,695.5 112.8,675.0"/>
<polygon fill="#f907ff" points="112.8,675.0 108.3,695.5 105.3,695.5 109.8,675.0"/>
<polygon fill="#f00dff" points="109.8,675.0 105.3,695.5 101.3,695.5 105.8,675.0"/>
<polygon fill="#e419ff" points="105.8,675.0 101.3,695.5 98.3,695.5 102.8,675.0"/>
<polygon fill="#d725ff" points="102.8,675.0 98.3,695.5 94.3,695.5 98.8,675.0"/>
<polygon fill="#b744ff" points="98.8,675.0 94.3,695.5 90.3,695.5 94.8,675.0"/>
<polygon fill="#a951ff" points="94.8,675.0 90.3,695.5 86.3,695.5 90.8,675.0"/>
<polygon fill="#9960ff" points="90.8,675.0 86.3,695.5 81.3,695.5 85.8,675.0"/>
<polygon fill="#8870ff" points="85.8,675.0 81.3,695.5 75.3,695.5 79.8,675.0"/>
<polygon fill="#797eff" points="79.8,675.0 75.3,695.5 68.3,695.5 72.8,675.0"/>
<polygon fill="#698dff" points="72.8,675.0 68.3,695.5 60.3,695.5 64.8,675.0"/>
<polygon fill="#5b9aff" points="64.8,675.0 60.3,695.5 50.3,695.5 54.8,675.0"/>
<polygon fill="#4ea7ff" points="54.8,675.0 50.3,695.5 35.3,695.5 39.8,675.0"/>
<polygon fill="#44b1ff" points="39.8,675.0 35.3,695.5 13.3,695.5 17.8,675.0"/>
<polygon fill="#3fb5ff" points="17.8,675.0 13.3,695.5 -191.7,695.5 -187.2,675.0"/>
<polygon fill="#fd07ff" points="138.3,695.0 133.8,715.5 103.8,715.5 108.3,695.0"/>
<polygon fill="#f907ff" points="108.3,695.0 103.8,715.5 100.8,715.5 105.3,695.0"/>
<polygon fill="#f00dff" points="105.3,695.0 100.8,715.5 96.8,715.5 101.3,695.0"/>
<polygon fill="#e419ff" points="101.3,695.0 96.8,715.5 93.8,715.5 98.3,695.0"/>
<polygon fill="#de1eff" points="98.3,695.0 93.8,715.5 89.8,715.5 94.3,695.0"/>
<polygon fill="#be3dff" points="94.3,695.0 89.8,715.5 85.8,715.5 90.3,695.0"/>
<polygon fill="#b04aff" points="90.3,695.0 85.8,715.5 81.8,715.5 86.3,695.0"/>
<polygon fill="#a059ff" points="86.3,695.0 81.8,715.5 76.8,715.5 81.3,695.0"/>
<polygon fill="#8f69ff" points="81.3,695.0 76.8,715.5 70.8,715.5 75.3,695.0"/>
<polygon fill="#8077ff" points="75.3,695.0 70.8,715.5 63.8,715.5 68.3,695.0"/>
<polygon fill="#7087ff" points="68.3,695.0 63.8,715.5 55.8,715.5 60.3,695.0"/>
<polygon fill="#6294ff" points="60.3,695.0 55.8,715.5 45.8,715.5 50.3,695.0"/>
<polygon fill="#55a1ff" points="50.3,695.0 45.8,715.5 30.8,715.5 35.3,695.0"/>
<polygon fill="#4baaff" points="35.3,695.0 30.8,715.5 8.8,715.5 13.3,695.0"/>
<polygon fill="#46afff" points="13.3,695.0 8.8,715.5 -196.2,715.5 -191.7,695.0"/>
<polygon fill="#fd07ff" points="133.8,715.0 129.3,735.5 99.3,735.5 103.8,715.0"/>
<polygon fill="#f907ff" points="103.8,715.0 99.3,735.5 96.3,735.5 100.8,715.0"/>
<polygon fill="#f00dff" points="100.8,715.0 96.3,735.5 92.3,735.5 96.8,715.0"/>
<polygon fill="#e419ff" points="96.8,715.0 92.3,735.5 89.3,735.5 93.8,715.0"/>
<polygon fill="#e518ff" points="93.8,715.0 89.3,735.5 85.3,735.5 89.8,715.0"/>
<polygon fill="#c437ff" points="89.8,715.0 85.3,735.5 81.3,735.5 85.8,715.0"/>
<polygon fill="#b744ff" points="85.8,715.0 81.3,735.5 77.3,735.5 81.8,715.0"/>
<polygon fill="#a753ff" points="81.8,715.0 77.3,735.5 72.3,735.5 76.8,715.0"/>
<polygon fill="#9663ff" points="76.8,715.0 72.3,735.5 66.3,735.5 70.8,715.0"/>
<polygon fill="#8771ff" points="70.8,715.0 66.3,735.5 59.3,735.5 63.8,715.0"/>
<polygon fill="#7780ff" points="63.8,715.0 59.3,735.5 51.3,735.5 55.8,715.0"/>
<polygon fill="#698dff" points="55.8,715.0 51.3,735.5 41.3,735.5 45.8,715.0"/>
<polygon fill="#5b9aff" points="45.8,715.0 41.3,735.5 26.3,735.5 30.8,715.0"/>
<polygon fill="#51a4ff" points="30.8,715.0 26.3,735.5 4.3,735.5 8.8,715.0"/>
<polygon fill="#4da8ff" points="8.8,715.0 4.3,735.5 -200.7,735.5 -196.2,715.0"/>
<polygon fill="#fd07ff" points="129.3,735.0 124.8,755.5 94.8,755.5 99.3,735.0"/>
<polygon fill="#f907ff" points="99.3,735.0 94.8,755.5 91.8,755.5 96.3,735.0"/>
<polygon fill="#f00dff" points="96.3,735.0 91.8,755.5 87.8,755.5 92.3,735.0"/>
<polygon fill="#e419ff" points="92.3,735.0 87.8,755.5 84.8,755.5 89.3,735.0"/>
<polygon fill="#ec11ff" points="89.3,735.0 84.8,755.5 80.8,755.5 85.3,735.0"/>
<polygon fill="#cb30ff" points="85.3,735.0 80.8,755.5 76.8,755.5 81.3,735.0"/>
<polygon fill="#be3dff" points="81.3,735.0 76.8,755.5 72.8,755.5 77.3,735.0"/>
<polygon fill="#ae4cff" points="77.3,735.0 72.8,755.5 67.8,755.5 72.3,735.0"/>
<polygon fill="#9d5cff" points="72.3,735.0 67.8,755.5 61.8,755.5 66.3,735.0"/>
<polygon fill="#8e6aff" points="66.3,735.0 61.8,755.5 54.8,755.5 59.3,735.0"/>
<polygon fill="#7e79ff" points="59.3,735.0 54.8,755.5 46.8,755.5 51.3,735.0"/>
<polygon fill="#7087ff" points="51.3,735.0 46.8,755.5 36.8,755.5 41.3,735.0"/>
<polygon fill="#6294ff" points="41.3,735.0 36.8,755.5 21.8,755.5 26.3,735.0"/>
<polygon fill="#589dff" points="26.3,735.0 21.8,755.5 -0.2,755.5 4.3,735.0"/>
<polygon fill="#54a1ff" points="4.3,735.0 -0.2,755.5 -205.2,755.5 -200.7,735.0"/>
<polygon fill="#fd07ff" points="124.8,755.0 120.3,775.5 90.3,775.5 94.8,755.0"/>
<polygon fill="#f907ff" points="94.8,755.0 90.3,775.5 87.3,775.5 91.8,755.0"/>
<polygon fill="#f00dff" points="91.8,755.0 87.3,775.5 83.3,775.5 87.8,755.0"/>
<polygon fill="#e419ff" points="87.8,755.0 83.3,775.5 80.3,775.5 84.8,755.0"/>
<polygon fill="#f10cff" points="84.8,755.0 80.3,775.5 76.3,775.5 80.8,755.0"/>
<polygon fill="#d12bff" points="80.8,755.0 76.3,775.5 72.3,775.5 76.8,755.0"/>
<polygon fill="#c338ff" points="76.8,755.0 72.3,775.5 68.3,775.5 72.8,755.0"/>
<polygon fill="#b347ff" points="72.8,755.0 68.3,775.5 63.3,775.5 67.8,755.0"/>
<polygon fill="#a257ff" points="67.8,755.0 63.3,775.5 57.3,775.5 61.8,755.0"/>
<polygon fill="#9365ff" points="61.8,755.0 57.3,775.5 50.3,775.5 54.8,755.0"/>
<polygon fill="#8374ff" points="54.8,755.0 50.3,775.5 42.3,775.5 46.8,755.0"/>
<polygon fill="#7582ff" points="46.8,755.0 42.3,775.5 32.3,775.5 36.8,755.0"/>
<polygon fill="#688fff" points="36.8,755.0 32.3,775.5 17.3,775.5 21.8,755.0"/>
<polygon fill="#5e98ff" points="21.8,755.0 17.3,775.5 -4.7,775.5 -0.2,755.0"/>
<polygon fill="#599cff" points="-0.2,755.0 -4.7,775.5 -209.7,775.5 -205.2,755.0"/>
<polygon fill="#fd07ff" points="120.3,775.0 115.9,795.5 85.9,795.5 90.3,775.0"/>
<polygon fill="#f907ff" points="90.3,775.0 85.9,795.5 82.9,795.5 87.3,775.0"/>
<polygon fill="#f00dff" points="87.3,775.0 82.9,795.5 78.9,795.5 83.3,775.0"/>
<polygon fill="#e419ff" points="83.3,775.0 78.9,795.5 75.9,795.5 80.3,775.0"/>
<polygon fill="#f10cff" points="80.3,775.0 75.9,795.5 71.9,795.5 76.3,775.0"/>
<polygon fill="#d12bff" points="76.3,775.0 71.9,795.5 67.9,795.5 72.3,775.0"/>
<polygon fill="#c338ff" points="72.3,775.0 67.9,795.5 63.9,795.5 68.3,775.0"/>
<polygon fill="#b347ff" points="68.3,775.0 63.9,795.5 58.9,795.5 63.3,775.0"/>
<polygon fill="#a257ff" points="63.3,775.0 58.9,795.5 52.9,795.5 57.3,775.0"/>
<polygon fill="#9365ff" points="57.3,775.0 52.9,795.5 45.9,795.5 50.3,775.0"/>
<polygon fill="#8374ff" points="50.3,775.0 45.9,795.5 37.9,795.5 42.3,775.0"/>
<polygon fill="#7582ff" points="42.3,775.0 37.9,795.5 27.9,795.5 32.3,775.0"/>
<polygon fill="#688fff" points="32.3,775.0 27.9,795.5 12.9,795.5 17.3,775.0"/>
<polygon fill="#5e98ff" points="17.3,775.0 12.9,795.5 -9.1,795.5 -4.7,775.0"/>
<polygon fill="#599cff" points="-4.7,775.0 -9.1,795.5 -214.1,795.5 -209.7,775.0"/>
<polygon fill="#fd07ff" points="115.9,795.0 111.8,815.5 81.8,815.5 85.9,795.0"/>
<polygon fill="#f907ff" points="85.9,795.0 81.8,815.5 78.8,815.5 82.9,795.0"/>
<polygon fill="#f00dff" points="82.9,795.0 78.8,815.5 74.8,815.5 78.9,795.0"/>
<polygon fill="#e419ff" points="78.9,795.0 74.8,815.5 71.8,815.5 75.9,795.0"/>
<polygon fill="#f10cff" points="75.9,795.0 71.8,815.5 67.8,815.5 71.9,795.0"/>
<polygon fill="#d12bff" points="71.9,795.0 67.8,815.5 63.8,815.5 67.9,795.0"/>
<polygon fill="#c338ff" points="67.9,795.0 63.8,815.5 59.8,815.5 63.9,795.0"/>
<polygon fill="#b347ff" points="63.9,795.0 59.8,815.5 54.8,815.5 58.9,795.0"/>
<polygon fill="#a257ff" points="58.9,795.0 54.8,815.5 48.8,815.5 52.9,795.0"/>
<polygon fill="#9365ff" points="52.9,795.0 48.8,815.5 41.8,815.5 45.9,795.0"/>
<polygon fill="#8374ff" points="45.9,795.0 41.8,815.5 33.8,815.5 37.9,795.0"/>
<polygon fill="#7582ff" points="37.9,795.0 33.8,815.5 23.8,815.5 27.9,795.0"/>
<polygon fill="#688fff" points="27.9,795.0 23.8,815.5 8.8,815.5 12.9,795.0"/>
<polygon fill="#5e98ff" points="12.9,795.0 8.8,815.5 -13.2,815.5 -9.1,795.0"/>
<polygon fill="#599cff" points="-9.1,795.0 -13.2,815.5 -218.2,815.5 -214.1,795.0"/>
<polygon fill="#fd07ff" points="111.8,815.0 107.6,835.5 77.6,835.5 81.8,815.0"/>
<polygon fill="#f907ff" points="81.8,815.0 77.6,835.5 74.6,835.5 78.8,815.0"/>
<polygon fill="#f00dff" points="78.8,815.0 74.6,835.5 70.6,835.5 74.8,815.0"/>
<polygon fill="#e419ff" points="74.8,815.0 70.6,835.5 67.6,835.5 71.8,815.0"/>
<polygon fill="#f10cff" points="71.8,815.0 67.6,835.5 63.6,835.5 67.8,815.0"/>
<polygon fill="#d12bff" points="67.8,815.0 63.6,835.5 59.6,835.5 63.8,815.0"/>
<polygon fill="#c338ff" points="63.8,815.0 59.6,835.5 55.6,835.5 59.8,815.0"/>
<polygon fill="#b347ff" points="59.8,815.0 55.6,835.5 50.6,835.5 54.8,815.0"/>
<polygon fill="#a257ff" points="54.8,815.0 50.6,835.5 44.6,835.5 48.8,815.0"/>
<polygon fill="#9365ff" points="48.8,815.0 44.6,835.5 37.6,835.5 41.8,815.0"/>
<polygon fill="#8374ff" points="41.8,815.0 37.6,835.5 29.6,835.5 33.8,815.0"/>
<polygon fill="#7582ff" points="33.8,815.0 29.6,835.5 19.6,835.5 23.8,815.0"/>
<polygon fill="#688fff" points="23.8,815.0 19.6,835.5 4.6,835.5 8.8,815.0"/>
<polygon fill="#5e98ff" points="8.8,815.0 4.6,835.5 -17.4,835.5 -13.2,815.0"/>
<polygon fill="#599cff" points="-13.2,815.0 -17.4,835.5 -222.4,835.5 -218.2,815.0"/>
<polygon fill="#fd07ff" points="107.6,835.0 103.4,855.5 73.4,855.5 77.6,835.0"/>
<polygon fill="#f907ff" points="77.6,835.0 73.4,855.5 70.4,855.5 74.6,835.0"/>
<polygon fill="#f00dff" points="74.6,835.0 70.4,855.5 66.4,855.5 70.6,835.0"/>
<polygon fill="#e419ff" points="70.6,835.0 66.4,855.5 63.4,855.5 67.6,835.0"/>
<polygon fill="#f10cff" points="67.6,835.0 63.4,855.5 59.4,855.5 63.6,835.0"/>
<polygon fill="#d12bff" points="63.6,835.0 59.4,855.5 55.4,855.5 59.6,835.0"/>
<polygon fill="#c338ff" points="59.6,835.0 55.4,855.5 51.4,855.5 55.6,835.0"/>
<polygon fill="#b347ff" points="55.6,835.0 51.4,855.5 46.4,855.5 50.6,835.0"/>
<polygon fill="#a257ff" points="50.6,835.0 46.4,855.5 40.4,855.5 44.6,835.0"/>
<polygon fill="#9365ff" points="44.6,835.0 40.4,855.5 33.4,855.5 37.6,835.0"/>
<polygon fill="#8374ff" points="37.6,835.0 33.4,855.5 25.4,855.5 29.6,835.0"/>
<polygon fill="#7582ff" points="29.6,835.0 25.4,855.5 15.4,855.5 19.6,835.0"/>
<polygon fill="#688fff" points="19.6,835.0 15.4,855.5 0.4,855.5 4.6,835.0"/>
<polygon fill="#5e98ff" points="4.6,835.0 0.4,855.5 -21.6,855.5 -17.4,835.0"/>
<polygon fill="#599cff" points="-17.4,835.0 -21.6,855.5 -226.6,855.5 -222.4,835.0"/>
<polygon fill="#fd07ff" points="103.4,855.0 99.2,875.5 69.2,875.5 73.4,855.0"/>
<polygon fill="#f907ff" points="73.4,855.0 69.2,875.5 66.2,875.5 70.4,855.0"/>
<polygon fill="#f00dff" points="70.4,855.0 66.2,875.5 62.2,875.5 66.4,855.0"/>
<polygon fill="#e419ff" points="66.4,855.0 62.2,875.5 59.2,875.5 63.4,855.0"/>
<polygon fill="#f10cff" points="63.4,855.0 59.2,875.5 55.2,875.5 59.4,855.0"/>
<polygon fill="#d12bff" points="59.4,855.0 55.2,875.5 51.2,875.5 55.4,855.0"/>
<polygon fill="#c338ff" points="55.4,855.0 51.2,875.5 47.2,875.5 51.4,855.0"/>
<polygon fill="#b347ff" points="51.4,855.0 47.2,875.5 42.2,875.5 46.4,855.0"/>
<polygon fill="#a257ff" points="46.4,855.0 42.2,875.5 36.2,875.5 40.4,855.0"/>
<polygon fill="#9365ff" points="40.4,855.0 36.2,875.5 29.2,875.5 33.4,855.0"/>
<polygon fill="#8374ff" points="33.4,855.0 29.2,875.5 21.2,875.5 25.4,855.0"/>
<polygon fill="#7582ff" points="25.4,855.0 21.2,875.5 11.2,875.5 15.4,855.0"/>
<polygon fill="#688fff" points="15.4,855.0 11.2,875.5 -3.8,875.5 0.4,855.0"/>
<polygon fill="#5e98ff" points="0.4,855.0 -3.8,875.5 -25.8,875.5 -21.6,855.0"/>
<polygon fill="#599cff" points="-21.6,855.0 -25.8,875.5 -230.8,875.5 -226.6,855.0"/>
<rect x="0" y="15" width="18" height="20.5" fill="#231700"/>
<rect x="0" y="35" width="18" height="20.5" fill="#231700"/>
<rect x="0" y="55" width="18" height="20.5" fill="#231700"/>
<rect x="0" y="75" width="18" height="20.5" fill="#231700"/>
<rect x="0" y="95" width="18" height="20.5" fill="#231700"/>
<rect x="0" y="115" width="18" height="20.5" fill="#231700"/>
<rect x="0" y="135" width="18" height="20.5" fill="#231700"/>
<rect x="0" y="155" width="18" height="20.5" fill="#231700"/>
<rect x="0" y="175" width="18" height="20.5" fill="#231700"/>
<rect x="0" y="195" width="18" height="20.5" fill="#231700"/>
<rect x="0" y="215" width="18" height="20.5" fill="#231700"/>
<rect x="0" y="235" width="18" height="20.5" fill="#242717"/>
<rect x="0" y="255" width="18" height="20.5" fill="#244646"/>
<rect x="0" y="275" width="18" height="20.5" fill="#246674"/>
<rect x="0" y="295" width="18" height="20.5" fill="#2585a2"/>
<rect x="0" y="315" width="18" height="20.5" fill="#25a4d1"/>
<rect x="0" y="335" width="18" height="20.5" fill="#25c4ff"/>
<rect x="0" y="355" width="18" height="20.5" fill="#25c4ff"/>
<rect x="0" y="375" width="18" height="20.5" fill="#25c4ff"/>
<rect x="0" y="395" width="18" height="20.5" fill="#26c4ff"/>
<rect x="0" y="415" width="18" height="20.5" fill="#26c4ff"/>
<rect x="0" y="435" width="18" height="20.5" fill="#2bc4ff"/>
<rect x="0" y="455" width="18" height="20.5" fill="#2bc3ff"/>
<rect x="0" y="475" width="18" height="20.5" fill="#2bc3ff"/>
<rect x="0" y="495" width="18" height="20.5" fill="#2cc3ff"/>
<rect x="0" y="515" width="18" height="20.5" fill="#2cc3ff"/>
<rect x="0" y="535" width="18" height="20.5" fill="#2cc3ff"/>
<rect x="0" y="555" width="18" height="20.5" fill="#2cc3ff"/>
<rect x="0" y="575" width="18" height="20.5" fill="#2cc3ff"/>
<rect x="0" y="595" width="18" height="20.5" fill="#2cc3ff"/>
<rect x="0" y="615" width="18" height="20.5" fill="#2cc3ff"/>
<rect x="0" y="635" width="18" height="20.5" fill="#2ec1ff"/>
<rect x="0" y="655" width="18" height="20.5" fill="#35bbff"/>
<rect x="0" y="675" width="18" height="20.5" fill="#3cb4ff"/>
<rect x="0" y="695" width="18" height="20.5" fill="#43adff"/>
<rect x="0" y="715" width="18" height="20.5" fill="#4aa7ff"/>
<rect x="0" y="735" width="18" height="20.5" fill="#539eff"/>
<rect x="0" y="755" width="18" height="20.5" fill="#5b96ff"/>
<rect x="0" y="775" width="18" height="20.5" fill="#5d94ff"/>
<rect x="0" y="795" width="18" height="20.5" fill="#6092ff"/>
<rect x="0" y="815" width="18" height="20.5" fill="#6290ff"/>
<rect x="0" y="835" width="18" height="20.5" fill="#648eff"/>
<rect x="0" y="855" width="18" height="20.5" fill="#678bff"/>
<ellipse cx="105" cy="48" rx="24" ry="9" fill="#411700"/>
<ellipse cx="94" cy="72" rx="10" ry="8" fill="#3c1700"/>
<ellipse cx="184" cy="108" rx="11" ry="14" fill="#6e1700"/>
<ellipse cx="168" cy="150" rx="7" ry="22" fill="#5a1700"/>
<ellipse cx="100" cy="182" rx="12" ry="8" fill="#3c1700"/>
</g></g>
<rect x="16" y="35" width="64" height="407" fill="#000"/><rect x="57" y="78" width="17" height="32" fill="rgb(255,255,255)"/><rect x="57" y="110" width="17" height="32" fill="rgb(230,230,230)"/><rect x="57" y="142" width="17" height="32" fill="rgb(200,200,200)"/><rect x="57" y="174" width="17" height="32" fill="rgb(178,178,178)"/><rect x="57" y="206" width="17" height="32" fill="rgb(155,155,155)"/><rect x="57" y="238" width="17" height="32" fill="rgb(135,135,135)"/><rect x="57" y="270" width="17" height="32" fill="rgb(112,112,112)"/><rect x="57" y="302" width="17" height="32" fill="rgb(92,92,92)"/><rect x="57" y="334" width="17" height="32" fill="rgb(60,60,60)"/><rect x="57" y="366" width="17" height="32" fill="rgb(32,32,32)"/><rect x="57" y="398" width="17" height="32" fill="rgb(10,10,10)"/><rect x="56.5" y="77.5" width="18" height="353" fill="none" stroke="#fff" stroke-width="1"/>
<text class="dj" transform="translate(18.60,82.00) scale(1.000,1)" x="0.00 7.20 15.60 23.60" y="0" fill="#fff" font-size="12.2">1.00</text><text class="dj" transform="translate(18.20,114.00) scale(1.000,1)" x="0.00 7.60 16.00 24.00" y="0" fill="#fff" font-size="12.2">0.80</text><text class="dj" transform="translate(18.20,146.00) scale(1.000,1)" x="0.00 7.60 16.00 24.00" y="0" fill="#fff" font-size="12.2">0.70</text><text class="dj" transform="translate(18.20,178.00) scale(1.000,1)" x="0.00 7.60 16.00 24.00" y="0" fill="#fff" font-size="12.2">0.60</text><text class="dj" transform="translate(18.20,210.00) scale(1.000,1)" x="0.00 7.60 16.00 24.00" y="0" fill="#fff" font-size="12.2">0.50</text><text class="dj" transform="translate(18.20,242.00) scale(1.000,1)" x="0.00 7.60 16.00 24.00" y="0" fill="#fff" font-size="12.2">0.40</text><text class="dj" transform="translate(18.20,274.00) scale(1.000,1)" x="0.00 7.60 16.00 24.00" y="0" fill="#fff" font-size="12.2">0.30</text><text class="dj" transform="translate(18.20,306.00) scale(1.000,1)" x="0.00 7.60 16.00 24.00" y="0" fill="#fff" font-size="12.2">0.25</text><text class="dj" transform="translate(18.20,338.00) scale(1.000,1)" x="0.00 7.60 16.00 24.00" y="0" fill="#fff" font-size="12.2">0.20</text><text class="dj" transform="translate(18.20,370.00) scale(1.000,1)" x="0.00 7.60 16.00 24.00" y="0" fill="#fff" font-size="12.2">0.15</text><text class="dj" transform="translate(18.20,402.00) scale(1.000,1)" x="0.00 7.60 16.00 24.00" y="0" fill="#fff" font-size="12.2">0.10</text><text class="dj" transform="translate(18.20,433.00) scale(1.000,1)" x="0.00 7.60 16.00 24.00" y="0" fill="#fff" font-size="12.2">0.00</text><text class="dj" transform="translate(35.80,53.00) scale(1.000,1)" x="0.00 8.00 16.40 24.40" y="0" fill="#fff" font-size="12.2">R.65</text><text class="dj" transform="translate(38.60,66.20) scale(1.000,1)" x="0.00 5.10 13.00 22.40" y="0.0 0.2 0.2 0.0" fill="#fff" font-size="12.2">(<tspan textLength="8.2" lengthAdjust="spacingAndGlyphs">-</tspan><tspan textLength="8.2" lengthAdjust="spacingAndGlyphs">-</tspan>)</text><text class="dj" transform="translate(31.20,72.30) scale(1.000,1)" x="0.00 4.80 12.80" y="0" fill="#ee9c6c" font-size="10.2">(K)</text>
<path d="M841.5 3.9 L839.4 10.6 L838.0 17.7 L837.4 24.5" fill="none" stroke="#fff" stroke-width="1" shape-rendering="crispEdges"/>
<path d="M837.6 35.0 L836.2 38.9 L832.7 43.4 L829.8 50.0 L826.4 55.8 L824.3 58.5 L826.4 60.3 L828.2 59.5 L829.6 61.4 L830.9 62.3 L833.5 61.4 L830.9 62.4 L829.4 65.9 L830.9 69.1 L831.5 72.2 L831.1 76.2 L830.4 75.9 L829.0 73.4 L825.6 73.4 L823.5 74.6 L823.7 77.0 L825.9 78.1 L827.4 81.2 L830.9 83.1 L833.0 84.7 L835.4 85.2 L836.7 86.3 L839.1 86.0 L840.9 85.2 L838.3 86.5 L836.2 87.3 L834.6 88.4 L833.0 88.1 L831.4 87.3 L827.7 87.1 L825.3 84.1 L824.0 86.5 L823.5 88.1 L824.3 90.2 L823.7 95.0 L822.0 102.7 L816.7 109.7 L813.2 111.9 L810.5 114.2 L811.1 118.6 L814.1 125.7 L816.5 130.0 L821.5 136.2 L822.7 143.3 L826.3 147.7 L830.7 153.0 L831.6 157.4 L836.0 161.9 L843.1 168.9 L850.2 173.4 L857.3 180.4 L860.8 186.6 L867.0 191.1 L870.5 198.1 L876.7 201.7 L880.3 207.0 L886.5 212.3 L891.8 217.6 L892.7 222.0 L896.2 228.2 L899.7 231.8 L902.4 238.0 L904.7 242.4 L901.5 247.7 L904.2 253.0 L909.5 257.1 L919.2 256.5 L924.5 254.4 L923.6 257.1 L917.4 260.1 L912.1 261.3 L906.8 261.9 L907.7 265.4 L911.4 270.0 L913.5 275.3 L921.2 283.3 L921.7 291.2 L925.6 301.0 L930.0 311.6 L934.4 317.8 L936.5 324.0 L937.1 331.9 L932.7 334.6 L929.1 339.0 L925.6 343.5 L930.0 349.6 L931.8 358.5 L935.3 368.2 L936.2 372.7 L941.5 380.6 L945.9 385.9 L947.7 392.1 L949.5 397.4 L948.2 406.3 L947.7 420.6 L945.0 429.5 L940.6 434.8 L936.2 440.4 L930.0 441.9 L923.5 447.5 L924.2 451.6 L921.2 456.0 L916.7 459.6 L912.7 463.1 L912.8 475.5 L908.8 479.4 L907.5 489.6 L905.8 501.2 L902.9 507.3 L900.8 514.4 L898.1 518.8 L897.8 525.0 L893.7 528.9 L890.2 532.1 L892.0 535.7 L892.8 546.3 L893.2 552.0 L891.9 560.6 L890.7 573.0 L890.7 585.4 L893.7 594.2 L898.7 604.5 L906.1 611.1 L914.6 622.6 L920.3 635.0 L925.6 646.5 L927.0 650.0 L932.3 655.8 L936.2 670.4 L940.6 676.5 L946.8 685.4 L949.5 690.5 L952.6 695.3 L959.6 703.3 L965.8 711.2 L968.5 721.0 L968.1 727.2 L965.3 732.5 L967.1 737.8 L965.3 742.2 L967.6 746.6 L967.6 755.5 L966.4 758.1 L966.7 763.5 L971.2 774.1 L975.6 779.4 L977.0 786.5 L976.5 790.9 L976.5 798.0 L977.7 799.7" fill="none" stroke="#fff" stroke-width="1" shape-rendering="crispEdges"/>
<polygon points="748.6,79.5 750.5,79.5 751.6,80.6 752.6,82.9 750.5,85.2 749.5,88 747.4,88.5 745.1,87.3 744.5,85.2 745.2,82.4 747,80.2" fill="none" stroke="#fff" stroke-width="1" shape-rendering="crispEdges"/>
<g fill="#00ffff"><rect x="8" y="35" width="1" height="765"/><rect x="147" y="35" width="1" height="765"/><rect x="286" y="35" width="1" height="765"/><rect x="425" y="35" width="1" height="765"/><rect x="564" y="35" width="1" height="765"/><rect x="703" y="35" width="1" height="765"/><rect x="842" y="35" width="1" height="765"/><rect x="981" y="35" width="1" height="48"/><rect x="981" y="95" width="1" height="128"/><rect x="981" y="234" width="1" height="127"/><rect x="981" y="372" width="1" height="128"/><rect x="981" y="511" width="1" height="128"/><rect x="981" y="650" width="1" height="150"/><rect x="1120" y="35" width="1" height="765"/><rect x="8" y="91" width="960" height="1"/><rect x="990" y="91" width="131" height="1"/><rect x="8" y="230" width="963" height="1"/><rect x="999" y="230" width="122" height="1"/><rect x="8" y="368" width="963" height="1"/><rect x="999" y="368" width="122" height="1"/><rect x="8" y="507" width="960" height="1"/><rect x="1002" y="507" width="119" height="1"/><rect x="8" y="646" width="960" height="1"/><rect x="1002" y="646" width="119" height="1"/><rect x="8" y="785" width="1113" height="1"/></g>
<text class="dj" transform="translate(139.60,34.00) scale(1.150,1)" x="0.00 6.43 15.13" y="0" fill="#ff0000" font-size="11">15<tspan class="mono" textLength="5.5" lengthAdjust="spacingAndGlyphs">W</tspan></text><text class="dj" transform="translate(276.60,34.00) scale(1.150,1)" x="0.00 6.43 15.13" y="0" fill="#ff0000" font-size="11">10<tspan class="mono" textLength="5.5" lengthAdjust="spacingAndGlyphs">W</tspan></text><text class="dj" transform="translate(423.00,34.00) scale(1.150,1)" x="0.00 8.70" y="0" fill="#ff0000" font-size="11">5<tspan class="mono" textLength="5.5" lengthAdjust="spacingAndGlyphs">W</tspan></text><text class="dj" transform="translate(558.00,34.00) scale(1.150,1)" x="0.00" y="0" fill="#ff0000" font-size="11">0</text><text class="dj" transform="translate(703.00,34.00) scale(1.150,1)" x="0.00 7.65" y="0" fill="#ff0000" font-size="11">5E</text><text class="dj" transform="translate(834.60,34.00) scale(1.150,1)" x="0.00 6.43 14.09" y="0" fill="#ff0000" font-size="11">10E</text><text class="dj" transform="translate(975.60,34.00) scale(1.150,1)" x="0.00 6.43 14.09" y="0" fill="#ff0000" font-size="11">15E</text><text class="dj" transform="translate(975.00,94.00) scale(1.150,1)" x="0.00" y="0" fill="#ff0000" font-size="11">0</text><text class="dj" transform="translate(981.00,233.00) scale(1.150,1)" x="0.00 7.83" y="0" fill="#ff0000" font-size="11">5S</text><text class="dj" transform="translate(973.60,371.00) scale(1.150,1)" x="0.00 6.43 14.26" y="0" fill="#ff0000" font-size="11">10S</text><text class="dj" transform="translate(975.60,510.00) scale(1.150,1)" x="0.00 6.43 14.26" y="0" fill="#ff0000" font-size="11">15S</text><text class="dj" transform="translate(975.00,649.00) scale(1.150,1)" x="0.00 6.96 14.78" y="0" fill="#ff0000" font-size="11">20S</text>
<text class="sans" x="9.5" y="26.9" font-size="10.6" fill="#ffb800" stroke="#ffb800" stroke-width="0.2">NASA Langley (M04.0)</text>
<text class="sans" x="399.6" y="16.3" font-size="16" textLength="145" lengthAdjust="spacing" fill="#fff">0.65um Reflectance</text>
<text class="sans" x="369" y="34.2" font-size="14" textLength="155" lengthAdjust="spacing" fill="#fff">Aug 21, 2017 18:45 UTC</text>
<text x="305.3" y="846.6" textLength="524.0" lengthAdjust="spacingAndGlyphs" fill="#fff" font-size="11" >MT10  0.65UM REFLECTANCE   AUG 21, 2017 18:45Z   NASA LARC</text>
</svg>
</body></html>
